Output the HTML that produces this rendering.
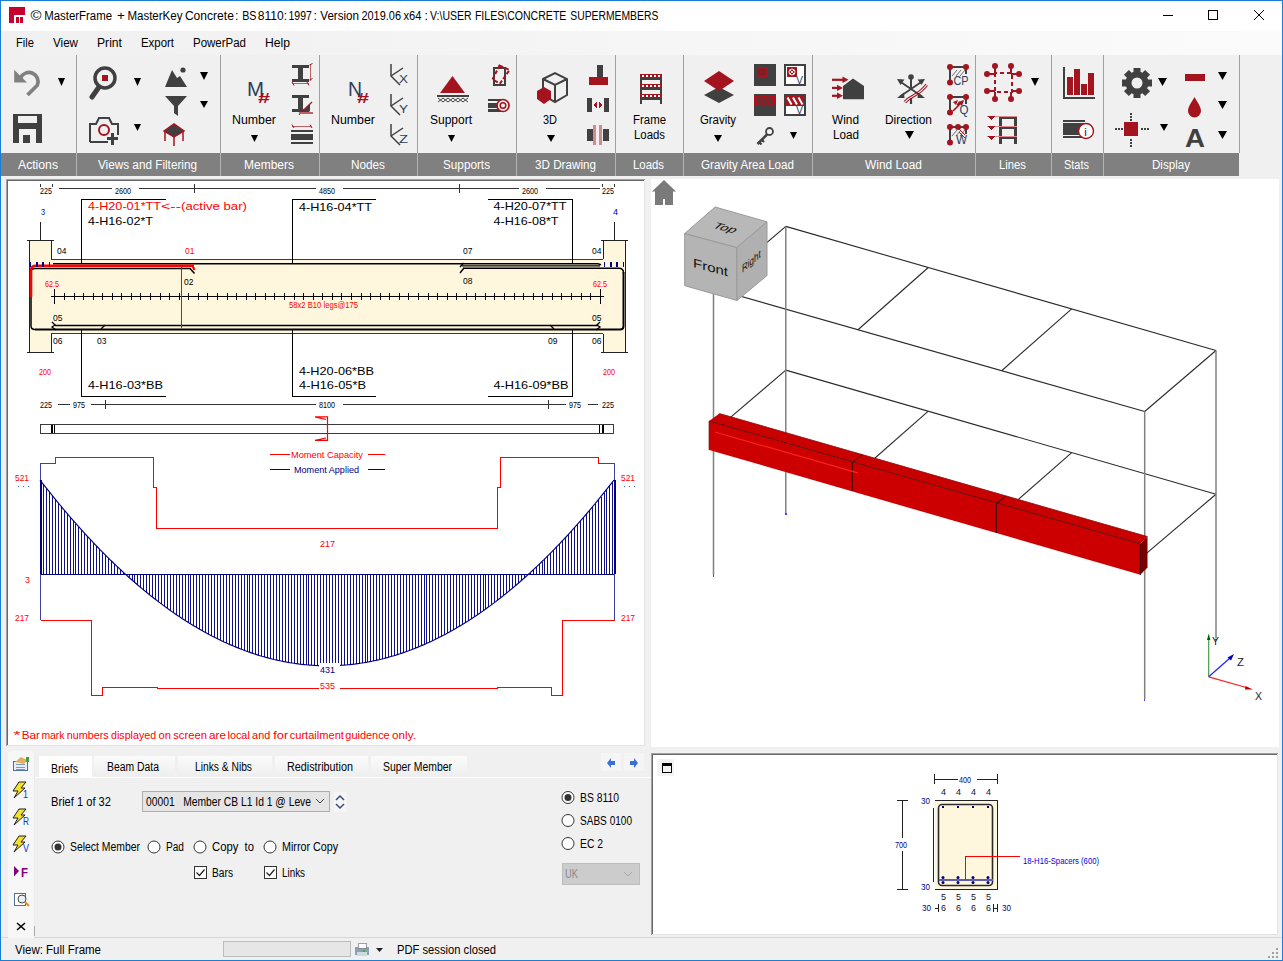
<!DOCTYPE html>
<html><head><meta charset="utf-8"><style>
html,body{margin:0;padding:0;width:1283px;height:961px;overflow:hidden;background:#f0f0f0}
svg{display:block}
</style></head><body>
<svg width="1283" height="961" viewBox="0 0 1283 961" shape-rendering="crispEdges">
<rect x="0" y="0" width="1283" height="961" fill="#f0f0f0" />
<rect x="1" y="1" width="1281" height="30" fill="#ffffff" />
<rect x="9" y="7" width="16" height="16" fill="#c8002e" />
<rect x="14" y="15" width="11" height="8" fill="#ffffff" />
<rect x="16" y="17" width="3" height="6" fill="#c8002e" />
<rect x="20" y="17" width="3" height="6" fill="#c8002e" />
<text x="30.5" y="20" font-size="12" fill="#000" textLength="11" lengthAdjust="spacingAndGlyphs" font-family='"Liberation Sans", sans-serif' >©</text>
<text x="44.2" y="20" font-size="12" fill="#000" textLength="67.9" lengthAdjust="spacingAndGlyphs" font-family='"Liberation Sans", sans-serif' >MasterFrame</text>
<text x="117.1" y="20" font-size="12" fill="#000" textLength="7.9" lengthAdjust="spacingAndGlyphs" font-family='"Liberation Sans", sans-serif' >+</text>
<text x="127.4" y="20" font-size="12" fill="#000" textLength="55.1" lengthAdjust="spacingAndGlyphs" font-family='"Liberation Sans", sans-serif' >MasterKey</text>
<text x="184.9" y="20" font-size="12" fill="#000" textLength="49.0" lengthAdjust="spacingAndGlyphs" font-family='"Liberation Sans", sans-serif' >Concrete</text>
<text x="235.1" y="20" font-size="12" fill="#000" textLength="3.4" lengthAdjust="spacingAndGlyphs" font-family='"Liberation Sans", sans-serif' >:</text>
<text x="242.2" y="20" font-size="12" fill="#000" textLength="14.3" lengthAdjust="spacingAndGlyphs" font-family='"Liberation Sans", sans-serif' >BS</text>
<text x="257.7" y="20" font-size="12" fill="#000" textLength="29.3" lengthAdjust="spacingAndGlyphs" font-family='"Liberation Sans", sans-serif' >8110:</text>
<text x="288.5" y="20" font-size="12" fill="#000" textLength="23.3" lengthAdjust="spacingAndGlyphs" font-family='"Liberation Sans", sans-serif' >1997</text>
<text x="313.4" y="20" font-size="12" fill="#000" textLength="3.4" lengthAdjust="spacingAndGlyphs" font-family='"Liberation Sans", sans-serif' >:</text>
<text x="320.3" y="20" font-size="12" fill="#000" textLength="38.7" lengthAdjust="spacingAndGlyphs" font-family='"Liberation Sans", sans-serif' >Version</text>
<text x="361.4" y="20" font-size="12" fill="#000" textLength="39.6" lengthAdjust="spacingAndGlyphs" font-family='"Liberation Sans", sans-serif' >2019.06</text>
<text x="403.5" y="20" font-size="12" fill="#000" textLength="18" lengthAdjust="spacingAndGlyphs" font-family='"Liberation Sans", sans-serif' >x64</text>
<text x="424.4" y="20" font-size="12" fill="#000" textLength="3.4" lengthAdjust="spacingAndGlyphs" font-family='"Liberation Sans", sans-serif' >:</text>
<text x="430.0" y="20" font-size="12" fill="#000" textLength="41.7" lengthAdjust="spacingAndGlyphs" font-family='"Liberation Sans", sans-serif' >V:\USER</text>
<text x="474.9" y="20" font-size="12" fill="#000" textLength="91.5" lengthAdjust="spacingAndGlyphs" font-family='"Liberation Sans", sans-serif' >FILES\CONCRETE</text>
<text x="570.3" y="20" font-size="12" fill="#000" textLength="88.0" lengthAdjust="spacingAndGlyphs" font-family='"Liberation Sans", sans-serif' >SUPERMEMBERS</text>
<line x1="1163" y1="15.5" x2="1173" y2="15.5" stroke="#000" stroke-width="1" />
<rect x="1208.5" y="10.5" width="9" height="9" fill="none" stroke="#000" stroke-width="1" />
<line x1="1254" y1="10" x2="1264" y2="20" stroke="#000" stroke-width="1" shape-rendering="geometricPrecision"/>
<line x1="1264" y1="10" x2="1254" y2="20" stroke="#000" stroke-width="1" shape-rendering="geometricPrecision"/>
<defs><linearGradient id="mg" x1="0" x2="1" y1="0" y2="0"><stop offset="0" stop-color="#f0f0f0"/><stop offset="1" stop-color="#fbfbfb"/></linearGradient></defs>
<rect x="1" y="31" width="1281" height="24" fill="url(#mg)" />
<text x="16" y="47" font-size="12" fill="#000" textLength="18" lengthAdjust="spacingAndGlyphs" font-family='"Liberation Sans", sans-serif' >File</text>
<text x="53" y="47" font-size="12" fill="#000" textLength="25" lengthAdjust="spacingAndGlyphs" font-family='"Liberation Sans", sans-serif' >View</text>
<text x="97" y="47" font-size="12" fill="#000" textLength="25" lengthAdjust="spacingAndGlyphs" font-family='"Liberation Sans", sans-serif' >Print</text>
<text x="141" y="47" font-size="12" fill="#000" textLength="33" lengthAdjust="spacingAndGlyphs" font-family='"Liberation Sans", sans-serif' >Export</text>
<text x="193" y="47" font-size="12" fill="#000" textLength="53" lengthAdjust="spacingAndGlyphs" font-family='"Liberation Sans", sans-serif' >PowerPad</text>
<text x="265" y="47" font-size="12" fill="#000" textLength="25" lengthAdjust="spacingAndGlyphs" font-family='"Liberation Sans", sans-serif' >Help</text>
<line x1="76.5" y1="55" x2="76.5" y2="153" stroke="#a0a0a0" stroke-width="1" />
<line x1="220.5" y1="55" x2="220.5" y2="153" stroke="#a0a0a0" stroke-width="1" />
<line x1="319.5" y1="55" x2="319.5" y2="153" stroke="#a0a0a0" stroke-width="1" />
<line x1="417.5" y1="55" x2="417.5" y2="153" stroke="#a0a0a0" stroke-width="1" />
<line x1="516.5" y1="55" x2="516.5" y2="153" stroke="#a0a0a0" stroke-width="1" />
<line x1="615.5" y1="55" x2="615.5" y2="153" stroke="#a0a0a0" stroke-width="1" />
<line x1="683.5" y1="55" x2="683.5" y2="153" stroke="#a0a0a0" stroke-width="1" />
<line x1="812.5" y1="55" x2="812.5" y2="153" stroke="#a0a0a0" stroke-width="1" />
<line x1="975.5" y1="55" x2="975.5" y2="153" stroke="#a0a0a0" stroke-width="1" />
<line x1="1051.5" y1="55" x2="1051.5" y2="153" stroke="#a0a0a0" stroke-width="1" />
<line x1="1103.5" y1="55" x2="1103.5" y2="153" stroke="#a0a0a0" stroke-width="1" />
<line x1="1239.5" y1="55" x2="1239.5" y2="153" stroke="#a0a0a0" stroke-width="1" />
<rect x="1" y="153" width="1238" height="23" fill="#808080" />
<line x1="76.5" y1="153" x2="76.5" y2="176" stroke="#b4b4b4" stroke-width="1" />
<line x1="220.5" y1="153" x2="220.5" y2="176" stroke="#b4b4b4" stroke-width="1" />
<line x1="319.5" y1="153" x2="319.5" y2="176" stroke="#b4b4b4" stroke-width="1" />
<line x1="417.5" y1="153" x2="417.5" y2="176" stroke="#b4b4b4" stroke-width="1" />
<line x1="516.5" y1="153" x2="516.5" y2="176" stroke="#b4b4b4" stroke-width="1" />
<line x1="615.5" y1="153" x2="615.5" y2="176" stroke="#b4b4b4" stroke-width="1" />
<line x1="683.5" y1="153" x2="683.5" y2="176" stroke="#b4b4b4" stroke-width="1" />
<line x1="812.5" y1="153" x2="812.5" y2="176" stroke="#b4b4b4" stroke-width="1" />
<line x1="975.5" y1="153" x2="975.5" y2="176" stroke="#b4b4b4" stroke-width="1" />
<line x1="1051.5" y1="153" x2="1051.5" y2="176" stroke="#b4b4b4" stroke-width="1" />
<line x1="1103.5" y1="153" x2="1103.5" y2="176" stroke="#b4b4b4" stroke-width="1" />
<text x="18" y="169" font-size="12" fill="#ffffff" textLength="40" lengthAdjust="spacingAndGlyphs" font-family='"Liberation Sans", sans-serif' >Actions</text>
<text x="98" y="169" font-size="12" fill="#ffffff" textLength="99" lengthAdjust="spacingAndGlyphs" font-family='"Liberation Sans", sans-serif' >Views and Filtering</text>
<text x="244" y="169" font-size="12" fill="#ffffff" textLength="50" lengthAdjust="spacingAndGlyphs" font-family='"Liberation Sans", sans-serif' >Members</text>
<text x="351" y="169" font-size="12" fill="#ffffff" textLength="34" lengthAdjust="spacingAndGlyphs" font-family='"Liberation Sans", sans-serif' >Nodes</text>
<text x="443" y="169" font-size="12" fill="#ffffff" textLength="47" lengthAdjust="spacingAndGlyphs" font-family='"Liberation Sans", sans-serif' >Supports</text>
<text x="535" y="169" font-size="12" fill="#ffffff" textLength="61" lengthAdjust="spacingAndGlyphs" font-family='"Liberation Sans", sans-serif' >3D Drawing</text>
<text x="633" y="169" font-size="12" fill="#ffffff" textLength="31" lengthAdjust="spacingAndGlyphs" font-family='"Liberation Sans", sans-serif' >Loads</text>
<text x="701" y="169" font-size="12" fill="#ffffff" textLength="93" lengthAdjust="spacingAndGlyphs" font-family='"Liberation Sans", sans-serif' >Gravity Area Load</text>
<text x="865" y="169" font-size="12" fill="#ffffff" textLength="57" lengthAdjust="spacingAndGlyphs" font-family='"Liberation Sans", sans-serif' >Wind Load</text>
<text x="999" y="169" font-size="12" fill="#ffffff" textLength="27" lengthAdjust="spacingAndGlyphs" font-family='"Liberation Sans", sans-serif' >Lines</text>
<text x="1064" y="169" font-size="12" fill="#ffffff" textLength="25" lengthAdjust="spacingAndGlyphs" font-family='"Liberation Sans", sans-serif' >Stats</text>
<text x="1152" y="169" font-size="12" fill="#ffffff" textLength="38" lengthAdjust="spacingAndGlyphs" font-family='"Liberation Sans", sans-serif' >Display</text>
<rect x="0.5" y="0.5" width="1282" height="960" fill="none" stroke="#1a7fd4" stroke-width="1" />
<rect x="6" y="179" width="639" height="567" fill="#ffffff" />
<line x1="6" y1="179.5" x2="645" y2="179.5" stroke="#a0a0a0" stroke-width="1" />
<line x1="6.5" y1="179" x2="6.5" y2="746" stroke="#a0a0a0" stroke-width="1" />
<line x1="7" y1="180.5" x2="644" y2="180.5" stroke="#696969" stroke-width="1" />
<line x1="7.5" y1="180" x2="7.5" y2="745" stroke="#696969" stroke-width="1" />
<line x1="644.5" y1="180" x2="644.5" y2="746" stroke="#e3e3e3" stroke-width="1" />
<line x1="7" y1="745.5" x2="645" y2="745.5" stroke="#e3e3e3" stroke-width="1" />
<rect x="651" y="179" width="628" height="568" fill="#ffffff" />
<rect x="651" y="753" width="627" height="182" fill="#ffffff" />
<line x1="651" y1="753.5" x2="1278" y2="753.5" stroke="#a0a0a0" stroke-width="1" />
<line x1="651.5" y1="753" x2="651.5" y2="935" stroke="#a0a0a0" stroke-width="1" />
<line x1="652" y1="754.5" x2="1277" y2="754.5" stroke="#696969" stroke-width="1" />
<line x1="652.5" y1="754" x2="652.5" y2="934" stroke="#696969" stroke-width="1" />
<line x1="1277.5" y1="754" x2="1277.5" y2="935" stroke="#e3e3e3" stroke-width="1" />
<line x1="652" y1="934.5" x2="1278" y2="934.5" stroke="#e3e3e3" stroke-width="1" />
<line x1="1" y1="937.5" x2="1282" y2="937.5" stroke="#d7d7d7" stroke-width="1" />
<text x="15" y="954" font-size="12" fill="#000" textLength="86" lengthAdjust="spacingAndGlyphs" font-family='"Liberation Sans", sans-serif' >View: Full Frame</text>
<rect x="223.5" y="941.5" width="127" height="15" fill="#e6e6e6" stroke="#bcbcbc" stroke-width="1" />
<text x="397" y="954" font-size="12" fill="#000" textLength="99" lengthAdjust="spacingAndGlyphs" font-family='"Liberation Sans", sans-serif' >PDF session closed</text>
<path d="M20.5,78 A8.9,8.9 0 1 1 37.3,85.3 L27.5,95" fill="none" stroke="#808080" stroke-width="3.7" shape-rendering="geometricPrecision"/>
<polygon points="14.2,69.7 27,82.6 14.2,82.6" fill="#808080" shape-rendering="geometricPrecision"/>
<polygon points="58,78 65,78 61.5,86" fill="#000" shape-rendering="geometricPrecision"/>
<rect x="13" y="114" width="29" height="29" fill="#404040" />
<rect x="18" y="116" width="19" height="7" fill="#f0f0f0" />
<rect x="19" y="129" width="17" height="14" fill="#f0f0f0" />
<rect x="23" y="135" width="7" height="8" fill="#404040" />
<circle cx="105" cy="78" r="10" fill="none" stroke="#404040" stroke-width="3.5" shape-rendering="geometricPrecision"/>
<rect x="102" y="75" width="6" height="6" fill="#a3141e" />
<line x1="99" y1="87" x2="92" y2="97" stroke="#404040" stroke-width="5" shape-rendering="geometricPrecision" stroke-linecap="round"/>
<polygon points="134,78 141,78 137.5,86" fill="#000" shape-rendering="geometricPrecision"/>
<path d="M90,142 V124 H96 L99,118 H109 L112,124 H118 V135" fill="none" stroke="#404040" stroke-width="2" shape-rendering="geometricPrecision"/>
<path d="M90,142 H108" fill="none" stroke="#404040" stroke-width="2" shape-rendering="geometricPrecision"/>
<circle cx="104" cy="130" r="5" fill="none" stroke="#a3141e" stroke-width="2" shape-rendering="geometricPrecision"/>
<rect x="111" y="133" width="3" height="12" fill="#404040" />
<rect x="107" y="137" width="11" height="3" fill="#404040" />
<polygon points="134,124 141,124 137.5,131" fill="#000" shape-rendering="geometricPrecision"/>
<polygon points="165,87 172,70 177,78 180,76 187,87" fill="#404040" shape-rendering="geometricPrecision"/>
<circle cx="183" cy="70" r="2.6" fill="#404040" shape-rendering="geometricPrecision"/>
<polygon points="200,72 208,72 204.0,80" fill="#000" shape-rendering="geometricPrecision"/>
<polygon points="165,96 187,96 178,106 178,116 174,113 174,106" fill="#404040" shape-rendering="geometricPrecision"/>
<polygon points="200,101 208,101 204.0,108" fill="#000" shape-rendering="geometricPrecision"/>
<polygon points="164,131 174,124 184,131 174,137" fill="#404040" stroke="#a3141e" stroke-width="1.5" shape-rendering="geometricPrecision"/>
<line x1="165" y1="131" x2="165" y2="141" stroke="#a3141e" stroke-width="1.5" shape-rendering="geometricPrecision"/>
<line x1="183" y1="131" x2="183" y2="141" stroke="#a3141e" stroke-width="1.5" shape-rendering="geometricPrecision"/>
<line x1="174" y1="137" x2="174" y2="146" stroke="#a3141e" stroke-width="1.5" shape-rendering="geometricPrecision"/>
<text x="247" y="96" font-size="20.5" fill="#2f3b5c" textLength="17" lengthAdjust="spacingAndGlyphs" font-family='"Liberation Sans", sans-serif' >M</text>
<text x="258" y="103" font-size="14" fill="#a3141e" textLength="12" lengthAdjust="spacingAndGlyphs" font-family='"Liberation Sans", sans-serif' font-weight="bold">#</text>
<text x="232" y="124" font-size="12" fill="#000" textLength="44" lengthAdjust="spacingAndGlyphs" font-family='"Liberation Sans", sans-serif' >Number</text>
<polygon points="251,135 258,135 254.5,142" fill="#000" shape-rendering="geometricPrecision"/>
<rect x="292" y="64.5" width="17" height="3.3" fill="#404040" />
<rect x="292" y="78.5" width="17" height="3.2" fill="#404040" />
<rect x="298" y="67" width="4.5" height="12" fill="#404040" />
<line x1="292" y1="83.8" x2="309" y2="83.8" stroke="#c06068" stroke-width="1.2" />
<line x1="310.8" y1="64" x2="310.8" y2="81" stroke="#c06068" stroke-width="1.2" />
<path d="M292,82 l2,3.5 M307,82 l2,3.5 M309.5,65 l3,-1.5 M309.5,80 l3,-1.5" fill="none" stroke="#a3141e" stroke-width="1" shape-rendering="geometricPrecision"/>
<rect x="292" y="95" width="17" height="3.3" fill="#404040" />
<rect x="292" y="108.5" width="17" height="3.2" fill="#404040" />
<rect x="298" y="97" width="4.5" height="12" fill="#404040" />
<polygon points="302,111.5 310,104 310,111.5" fill="#404040" shape-rendering="geometricPrecision"/>
<line x1="299" y1="114.5" x2="312" y2="102" stroke="#a3141e" stroke-width="1.2" shape-rendering="geometricPrecision"/>
<line x1="299" y1="113" x2="313" y2="113" stroke="#c06068" stroke-width="1.2" />
<line x1="292" y1="126.5" x2="312" y2="126.5" stroke="#c06068" stroke-width="1.2" />
<path d="M292,124.5 l2,3.5 M310,124.5 l2,3.5" fill="none" stroke="#a3141e" stroke-width="1" shape-rendering="geometricPrecision"/>
<rect x="291" y="129.7" width="22" height="2" fill="#404040" />
<rect x="291" y="133.6" width="22" height="6.7" fill="#404040" />
<rect x="291" y="141.7" width="22" height="2" fill="#404040" />
<text x="348" y="96" font-size="20.5" fill="#2f3b5c" textLength="14" lengthAdjust="spacingAndGlyphs" font-family='"Liberation Sans", sans-serif' >N</text>
<text x="357" y="103" font-size="14" fill="#a3141e" textLength="12" lengthAdjust="spacingAndGlyphs" font-family='"Liberation Sans", sans-serif' font-weight="bold">#</text>
<text x="331" y="124" font-size="12" fill="#000" textLength="44" lengthAdjust="spacingAndGlyphs" font-family='"Liberation Sans", sans-serif' >Number</text>
<path d="M391,64 V76 L400,85" fill="none" stroke="#404040" stroke-width="1.5" shape-rendering="geometricPrecision"/>
<line x1="391" y1="76" x2="403" y2="68" stroke="#404040" stroke-width="1.5" shape-rendering="geometricPrecision"/>
<text x="399" y="83" font-size="11" fill="#2f3b5c" textLength="9" lengthAdjust="spacingAndGlyphs" font-family='"Liberation Sans", sans-serif' >X</text>
<path d="M391,94 V106 L400,115" fill="none" stroke="#404040" stroke-width="1.5" shape-rendering="geometricPrecision"/>
<line x1="391" y1="106" x2="403" y2="98" stroke="#404040" stroke-width="1.5" shape-rendering="geometricPrecision"/>
<text x="399" y="113" font-size="11" fill="#2f3b5c" textLength="9" lengthAdjust="spacingAndGlyphs" font-family='"Liberation Sans", sans-serif' >Y</text>
<path d="M391,124 V136 L400,145" fill="none" stroke="#404040" stroke-width="1.5" shape-rendering="geometricPrecision"/>
<line x1="391" y1="136" x2="403" y2="128" stroke="#404040" stroke-width="1.5" shape-rendering="geometricPrecision"/>
<text x="399" y="143" font-size="11" fill="#2f3b5c" textLength="9" lengthAdjust="spacingAndGlyphs" font-family='"Liberation Sans", sans-serif' >Z</text>
<polygon points="440,93 452.5,76 465,93" fill="#a3141e" shape-rendering="geometricPrecision"/>
<rect x="437" y="95" width="32" height="2" fill="#404040" />
<path d="M438,98 L443,102 M443,98 L438,102" fill="none" stroke="#404040" stroke-width="1" shape-rendering="geometricPrecision"/>
<path d="M443,98 L448,102 M448,98 L443,102" fill="none" stroke="#404040" stroke-width="1" shape-rendering="geometricPrecision"/>
<path d="M448,98 L453,102 M453,98 L448,102" fill="none" stroke="#404040" stroke-width="1" shape-rendering="geometricPrecision"/>
<path d="M453,98 L458,102 M458,98 L453,102" fill="none" stroke="#404040" stroke-width="1" shape-rendering="geometricPrecision"/>
<path d="M458,98 L463,102 M463,98 L458,102" fill="none" stroke="#404040" stroke-width="1" shape-rendering="geometricPrecision"/>
<path d="M463,98 L468,102 M468,98 L463,102" fill="none" stroke="#404040" stroke-width="1" shape-rendering="geometricPrecision"/>
<text x="430" y="124" font-size="12" fill="#000" textLength="42" lengthAdjust="spacingAndGlyphs" font-family='"Liberation Sans", sans-serif' >Support</text>
<polygon points="448,135 455,135 451.5,142" fill="#000" shape-rendering="geometricPrecision"/>
<rect x="493.5" y="67.5" width="11.5" height="17.5" fill="none" stroke="#404040" stroke-width="2" />
<polygon points="499.5,65.5 509.5,70 500,83.5 492.5,79.5" fill="none" stroke="#a3141e" stroke-width="2" shape-rendering="geometricPrecision" stroke-dasharray="4,2"/>
<rect x="488" y="99" width="15" height="2.2" fill="#404040" />
<rect x="488" y="102.5" width="15" height="5.5" fill="#404040" />
<rect x="488" y="109.3" width="15" height="2.2" fill="#404040" />
<circle cx="503" cy="105.5" r="6" fill="#f0f0f0" stroke="#a3141e" stroke-width="1.7" shape-rendering="geometricPrecision"/>
<circle cx="503" cy="105.5" r="2.8" fill="none" stroke="#a3141e" stroke-width="1.5" shape-rendering="geometricPrecision"/>
<polygon points="543,79 555,73 567,79 567,95 555,102 543,95" fill="none" stroke="#404040" stroke-width="2" shape-rendering="geometricPrecision"/>
<path d="M543,79 L555,85 L567,79 M555,85 V102" fill="none" stroke="#404040" stroke-width="2" shape-rendering="geometricPrecision"/>
<polygon points="544,87 551,91 551,99 544,104 537,99 537,91" fill="#a3141e" shape-rendering="geometricPrecision"/>
<text x="543" y="124" font-size="12" fill="#000" textLength="14" lengthAdjust="spacingAndGlyphs" font-family='"Liberation Sans", sans-serif' >3D</text>
<polygon points="547,135 555,135 551.0,142" fill="#000" shape-rendering="geometricPrecision"/>
<rect x="597" y="65" width="6" height="12" fill="#404040" />
<rect x="589" y="77" width="19" height="8" fill="#a3141e" />
<rect x="587" y="98" width="5" height="14" fill="#404040" />
<rect x="604" y="98" width="5" height="14" fill="#404040" />
<polygon points="593,105 597,102 597,108" fill="#a3141e" />
<polygon points="603,105 599,102 599,108" fill="#a3141e" />
<rect x="587" y="129" width="6" height="12" fill="#404040" />
<rect x="603" y="129" width="6" height="12" fill="#404040" />
<rect x="593" y="125" width="3" height="20" fill="#d08a90" />
<rect x="599" y="125" width="3" height="20" fill="#d08a90" />
<rect x="640" y="74" width="2.3" height="30" fill="#404040" />
<rect x="660" y="74" width="2.3" height="30" fill="#404040" />
<rect x="640" y="74" width="22.3" height="4.3" fill="#a3141e" />
<rect x="641" y="78.3" width="20" height="2" fill="#404040" />
<rect x="642.3" y="75.3" width="2" height="2" fill="#ffffff" />
<rect x="646.3" y="75.3" width="2" height="2" fill="#ffffff" />
<rect x="650.3" y="75.3" width="2" height="2" fill="#ffffff" />
<rect x="654.3" y="75.3" width="2" height="2" fill="#ffffff" />
<rect x="658.3" y="75.3" width="2" height="2" fill="#ffffff" />
<rect x="640" y="84" width="22.3" height="4.3" fill="#a3141e" />
<rect x="641" y="88.3" width="20" height="2" fill="#404040" />
<rect x="642.3" y="85.3" width="2" height="2" fill="#ffffff" />
<rect x="646.3" y="85.3" width="2" height="2" fill="#ffffff" />
<rect x="650.3" y="85.3" width="2" height="2" fill="#ffffff" />
<rect x="654.3" y="85.3" width="2" height="2" fill="#ffffff" />
<rect x="658.3" y="85.3" width="2" height="2" fill="#ffffff" />
<rect x="640" y="94" width="22.3" height="4.3" fill="#a3141e" />
<rect x="641" y="98.3" width="20" height="2" fill="#404040" />
<rect x="642.3" y="95.3" width="2" height="2" fill="#ffffff" />
<rect x="646.3" y="95.3" width="2" height="2" fill="#ffffff" />
<rect x="650.3" y="95.3" width="2" height="2" fill="#ffffff" />
<rect x="654.3" y="95.3" width="2" height="2" fill="#ffffff" />
<rect x="658.3" y="95.3" width="2" height="2" fill="#ffffff" />
<text x="633" y="124" font-size="12" fill="#000" textLength="33" lengthAdjust="spacingAndGlyphs" font-family='"Liberation Sans", sans-serif' >Frame</text>
<text x="634" y="139" font-size="12" fill="#000" textLength="31" lengthAdjust="spacingAndGlyphs" font-family='"Liberation Sans", sans-serif' >Loads</text>
<polygon points="704,95 719,87 734,95 719,103" fill="#404040" shape-rendering="geometricPrecision"/>
<polygon points="704,81 719,71 734,81 719,91" fill="#a3141e" shape-rendering="geometricPrecision"/>
<text x="700" y="124" font-size="12" fill="#000" textLength="36" lengthAdjust="spacingAndGlyphs" font-family='"Liberation Sans", sans-serif' >Gravity</text>
<polygon points="714,135 722,135 718.0,142" fill="#000" shape-rendering="geometricPrecision"/>
<rect x="754" y="64" width="22" height="22" fill="#404040" />
<rect x="757" y="67" width="10" height="10" fill="#a3141e" />
<circle cx="762" cy="72" r="3" fill="none" stroke="#5a2a2a" stroke-width="0.9" shape-rendering="geometricPrecision"/>
<path d="M760,70 l4,4 m0,-4 l-4,4" fill="none" stroke="#5a2a2a" stroke-width="0.9" shape-rendering="geometricPrecision"/>
<rect x="785" y="65" width="20" height="20" fill="#ffffff" stroke="#404040" stroke-width="2" />
<rect x="787" y="67" width="10" height="10" fill="#a3141e" />
<circle cx="792" cy="72" r="3" fill="none" stroke="#ffffff" stroke-width="0.9" shape-rendering="geometricPrecision"/>
<path d="M790,70 l4,4 m0,-4 l-4,4" fill="none" stroke="#ffffff" stroke-width="0.9" shape-rendering="geometricPrecision"/>
<text x="796" y="84" font-size="10" fill="#2f3b5c" textLength="7" lengthAdjust="spacingAndGlyphs" font-family='"Liberation Sans", sans-serif' >V</text>
<rect x="754" y="94" width="22" height="22" fill="#404040" />
<rect x="754" y="96" width="22" height="10" fill="#a3141e" />
<line x1="757.0" y1="97.5" x2="761.0" y2="104.5" stroke="#404040" stroke-width="2" shape-rendering="geometricPrecision"/>
<line x1="762.5" y1="97.5" x2="766.5" y2="104.5" stroke="#404040" stroke-width="2" shape-rendering="geometricPrecision"/>
<line x1="768.0" y1="97.5" x2="772.0" y2="104.5" stroke="#404040" stroke-width="2" shape-rendering="geometricPrecision"/>
<rect x="785" y="95" width="20" height="20" fill="#ffffff" stroke="#404040" stroke-width="2" />
<rect x="786" y="96" width="18" height="10" fill="#a3141e" />
<line x1="787.5" y1="97.5" x2="791.5" y2="104.5" stroke="#ffffff" stroke-width="2" shape-rendering="geometricPrecision"/>
<line x1="793.0" y1="97.5" x2="797.0" y2="104.5" stroke="#ffffff" stroke-width="2" shape-rendering="geometricPrecision"/>
<line x1="798.5" y1="97.5" x2="802.5" y2="104.5" stroke="#ffffff" stroke-width="2" shape-rendering="geometricPrecision"/>
<text x="796" y="114" font-size="10" fill="#2f3b5c" textLength="7" lengthAdjust="spacingAndGlyphs" font-family='"Liberation Sans", sans-serif' >V</text>
<circle cx="769.5" cy="131.5" r="3.5" fill="none" stroke="#404040" stroke-width="1.8" shape-rendering="geometricPrecision"/>
<path d="M767,134.5 L757.5,144" fill="none" stroke="#404040" stroke-width="2.6" shape-rendering="geometricPrecision"/>
<path d="M759,142 l2.5,2.5 M761.5,139.5 l2.5,2.5" fill="none" stroke="#404040" stroke-width="2.2" shape-rendering="geometricPrecision"/>
<polygon points="790,132 797,132 793.5,139" fill="#000" shape-rendering="geometricPrecision"/>
<polygon points="843,86 853,78.6 864,86 864,99.2 843,99.2" fill="#404040" shape-rendering="geometricPrecision"/>
<line x1="832" y1="79.8" x2="844.5" y2="79.8" stroke="#a3141e" stroke-width="2.2" shape-rendering="geometricPrecision"/>
<polygon points="842.5,76.6 848.5,79.8 842.5,83.0" fill="#a3141e" shape-rendering="geometricPrecision"/>
<line x1="832" y1="87.9" x2="839" y2="87.9" stroke="#a3141e" stroke-width="2.2" shape-rendering="geometricPrecision"/>
<polygon points="837,84.7 843,87.9 837,91.10000000000001" fill="#a3141e" shape-rendering="geometricPrecision"/>
<line x1="832" y1="95.8" x2="839" y2="95.8" stroke="#a3141e" stroke-width="2.2" shape-rendering="geometricPrecision"/>
<polygon points="837,92.6 843,95.8 837,99.0" fill="#a3141e" shape-rendering="geometricPrecision"/>
<text x="832" y="124" font-size="12" fill="#000" textLength="27" lengthAdjust="spacingAndGlyphs" font-family='"Liberation Sans", sans-serif' >Wind</text>
<text x="833" y="139" font-size="12" fill="#000" textLength="26" lengthAdjust="spacingAndGlyphs" font-family='"Liberation Sans", sans-serif' >Load</text>
<circle cx="911" cy="77" r="2.8" fill="#404040" shape-rendering="geometricPrecision"/>
<line x1="911" y1="77" x2="911" y2="89" stroke="#404040" stroke-width="2" shape-rendering="geometricPrecision"/>
<line x1="911" y1="98" x2="911" y2="104" stroke="#404040" stroke-width="2.2" shape-rendering="geometricPrecision"/>
<path d="M911,89 L900,81.5 M911,89 L922,81.5 M911,89 L900,96.5 M911,89 L922,96.5" fill="none" stroke="#404040" stroke-width="1.8" shape-rendering="geometricPrecision"/>
<polygon points="897,79 904.5,79.5 900.5,85" fill="#404040" shape-rendering="geometricPrecision"/>
<polygon points="925,79 917.5,79.5 921.5,85" fill="#404040" shape-rendering="geometricPrecision"/>
<polygon points="897,98 904,92.5 904.5,98" fill="#404040" shape-rendering="geometricPrecision"/>
<polygon points="925,98 918,92.5 917.5,98" fill="#404040" shape-rendering="geometricPrecision"/>
<path d="M904,101.5 C910,94 917,96 926,84 M905.5,103 C911.5,95.5 918.5,97.5 927.5,85.5" fill="none" stroke="#a3141e" stroke-width="1.1" shape-rendering="geometricPrecision"/>
<text x="885" y="124" font-size="12" fill="#000" textLength="47" lengthAdjust="spacingAndGlyphs" font-family='"Liberation Sans", sans-serif' >Direction</text>
<polygon points="905,131 914,131 909.5,139" fill="#000" shape-rendering="geometricPrecision"/>
<path d="M966,74 V67 H950 V82.5" fill="none" stroke="#404040" stroke-width="2" shape-rendering="geometricPrecision"/>
<line x1="952" y1="76" x2="957" y2="70" stroke="#707070" stroke-width="1" shape-rendering="geometricPrecision"/>
<line x1="956" y1="76" x2="961" y2="70" stroke="#707070" stroke-width="1" shape-rendering="geometricPrecision"/>
<line x1="960" y1="76" x2="965" y2="70" stroke="#707070" stroke-width="1" shape-rendering="geometricPrecision"/>
<circle cx="950" cy="67" r="3" fill="#a3141e" shape-rendering="geometricPrecision"/>
<circle cx="966" cy="67" r="3" fill="#a3141e" shape-rendering="geometricPrecision"/>
<circle cx="950" cy="82.5" r="3" fill="#a3141e" shape-rendering="geometricPrecision"/>
<text x="953.5" y="84.8" font-size="12" fill="#2f3b5c" textLength="15" lengthAdjust="spacingAndGlyphs" font-family='"Liberation Sans", sans-serif' >CP</text>
<path d="M966,104 V97 H950 V112.5" fill="none" stroke="#404040" stroke-width="2" shape-rendering="geometricPrecision"/>
<path d="M953,111 L963,101 M957,105 l3,-3" fill="none" stroke="#a3141e" stroke-width="1.6" shape-rendering="geometricPrecision"/>
<polygon points="964,100 958,102 962,106" fill="#a3141e" shape-rendering="geometricPrecision"/>
<polygon points="958,100 953,102 956,105" fill="#a3141e" shape-rendering="geometricPrecision"/>
<circle cx="950" cy="97" r="3" fill="#a3141e" shape-rendering="geometricPrecision"/>
<circle cx="966" cy="97" r="3" fill="#a3141e" shape-rendering="geometricPrecision"/>
<circle cx="950" cy="112.5" r="3" fill="#a3141e" shape-rendering="geometricPrecision"/>
<text x="959.5" y="113.5" font-size="12" fill="#2f3b5c" textLength="9" lengthAdjust="spacingAndGlyphs" font-family='"Liberation Sans", sans-serif' >Q</text>
<path d="M966,134 V127 H950 V142.5" fill="none" stroke="#404040" stroke-width="2" shape-rendering="geometricPrecision"/>
<line x1="952" y1="136" x2="957" y2="130" stroke="#707070" stroke-width="1" shape-rendering="geometricPrecision"/>
<line x1="956" y1="136" x2="961" y2="130" stroke="#707070" stroke-width="1" shape-rendering="geometricPrecision"/>
<line x1="960" y1="136" x2="965" y2="130" stroke="#707070" stroke-width="1" shape-rendering="geometricPrecision"/>
<path d="M959,129 l6,6 M959,132 l6,6" fill="none" stroke="#a3141e" stroke-width="1" shape-rendering="geometricPrecision"/>
<circle cx="950" cy="127" r="3" fill="#a3141e" shape-rendering="geometricPrecision"/>
<circle cx="966" cy="127" r="3" fill="#a3141e" shape-rendering="geometricPrecision"/>
<circle cx="950" cy="142.5" r="3" fill="#a3141e" shape-rendering="geometricPrecision"/>
<circle cx="958" cy="127" r="3" fill="#a3141e" shape-rendering="geometricPrecision"/>
<text x="956" y="144.3" font-size="12" fill="#2f3b5c" textLength="11" lengthAdjust="spacingAndGlyphs" font-family='"Liberation Sans", sans-serif' >W</text>
<path d="M995,73 V92 H1012 V73 Z" fill="none" stroke="#a3141e" stroke-width="2" stroke-dasharray="4,3"/>
<circle cx="995" cy="66" r="3" fill="#a3141e" shape-rendering="geometricPrecision"/>
<circle cx="1011" cy="66" r="3" fill="#a3141e" shape-rendering="geometricPrecision"/>
<circle cx="987" cy="74" r="3" fill="#a3141e" shape-rendering="geometricPrecision"/>
<circle cx="1019" cy="74" r="3" fill="#a3141e" shape-rendering="geometricPrecision"/>
<circle cx="987" cy="91" r="3" fill="#a3141e" shape-rendering="geometricPrecision"/>
<circle cx="1019" cy="91" r="3" fill="#a3141e" shape-rendering="geometricPrecision"/>
<circle cx="995" cy="99" r="3" fill="#a3141e" shape-rendering="geometricPrecision"/>
<circle cx="1011" cy="99" r="3" fill="#a3141e" shape-rendering="geometricPrecision"/>
<line x1="995" y1="66" x2="995" y2="73" stroke="#a3141e" stroke-width="2" />
<line x1="1011" y1="66" x2="1011" y2="73" stroke="#a3141e" stroke-width="2" />
<line x1="987" y1="74" x2="995" y2="74" stroke="#a3141e" stroke-width="2" />
<line x1="1011" y1="74" x2="1019" y2="74" stroke="#a3141e" stroke-width="2" />
<line x1="987" y1="91" x2="995" y2="91" stroke="#a3141e" stroke-width="2" />
<line x1="1011" y1="91" x2="1019" y2="91" stroke="#a3141e" stroke-width="2" />
<line x1="995" y1="92" x2="995" y2="99" stroke="#a3141e" stroke-width="2" />
<line x1="1011" y1="92" x2="1011" y2="99" stroke="#a3141e" stroke-width="2" />
<polygon points="1031,78 1039,78 1035.0,86" fill="#000" shape-rendering="geometricPrecision"/>
<rect x="999" y="116" width="3" height="28" fill="#404040" />
<rect x="1014" y="116" width="3" height="28" fill="#404040" />
<rect x="999" y="116" width="18" height="3" fill="#404040" />
<line x1="987" y1="116.5" x2="1017" y2="116.5" stroke="#e08a90" stroke-width="1" />
<polygon points="987,116 995,116 991,120" fill="#a3141e" />
<rect x="999" y="126" width="18" height="3" fill="#404040" />
<line x1="987" y1="126.5" x2="1017" y2="126.5" stroke="#e08a90" stroke-width="1" />
<polygon points="987,126 995,126 991,130" fill="#a3141e" />
<rect x="999" y="136" width="18" height="3" fill="#404040" />
<line x1="987" y1="136.5" x2="1017" y2="136.5" stroke="#e08a90" stroke-width="1" />
<polygon points="987,136 995,136 991,140" fill="#a3141e" />
<rect x="1063" y="67" width="2" height="32" fill="#404040" />
<rect x="1063" y="97" width="32" height="2" fill="#404040" />
<rect x="1067" y="77" width="6" height="18" fill="#a3141e" />
<rect x="1074" y="69" width="6" height="26" fill="#a3141e" />
<rect x="1081" y="84" width="6" height="11" fill="#a3141e" />
<rect x="1088" y="73" width="6" height="22" fill="#a3141e" />
<rect x="1063" y="120" width="22" height="2" fill="#404040" />
<rect x="1063" y="123" width="22" height="12" fill="#404040" />
<rect x="1063" y="136" width="22" height="2" fill="#404040" />
<circle cx="1086" cy="131" r="7.5" fill="#ffffff" stroke="#a3141e" stroke-width="1.4" shape-rendering="geometricPrecision"/>
<text x="1084" y="136" font-size="10" fill="#2f3b5c" textLength="3" lengthAdjust="spacingAndGlyphs" font-family='"Liberation Sans", sans-serif' >i</text>
<circle cx="1137" cy="83" r="11.5" fill="#404040" shape-rendering="geometricPrecision"/>
<rect x="1133.5" y="68" width="7" height="6" fill="#404040" transform="rotate(0 1137 83)" shape-rendering="geometricPrecision"/>
<rect x="1133.5" y="68" width="7" height="6" fill="#404040" transform="rotate(45 1137 83)" shape-rendering="geometricPrecision"/>
<rect x="1133.5" y="68" width="7" height="6" fill="#404040" transform="rotate(90 1137 83)" shape-rendering="geometricPrecision"/>
<rect x="1133.5" y="68" width="7" height="6" fill="#404040" transform="rotate(135 1137 83)" shape-rendering="geometricPrecision"/>
<rect x="1133.5" y="68" width="7" height="6" fill="#404040" transform="rotate(180 1137 83)" shape-rendering="geometricPrecision"/>
<rect x="1133.5" y="68" width="7" height="6" fill="#404040" transform="rotate(225 1137 83)" shape-rendering="geometricPrecision"/>
<rect x="1133.5" y="68" width="7" height="6" fill="#404040" transform="rotate(270 1137 83)" shape-rendering="geometricPrecision"/>
<rect x="1133.5" y="68" width="7" height="6" fill="#404040" transform="rotate(315 1137 83)" shape-rendering="geometricPrecision"/>
<circle cx="1137" cy="83" r="5.5" fill="#f0f0f0" shape-rendering="geometricPrecision"/>
<polygon points="1158,78 1167,78 1162.5,86" fill="#000" shape-rendering="geometricPrecision"/>
<rect x="1124" y="122" width="14" height="14" fill="#a3141e" />
<rect x="1115" y="128" width="1.5" height="2" fill="#404040" />
<rect x="1141" y="128" width="1.5" height="2" fill="#404040" />
<rect x="1130" y="113" width="2" height="1.5" fill="#404040" />
<rect x="1130" y="139" width="2" height="1.5" fill="#404040" />
<rect x="1118" y="128" width="1.5" height="2" fill="#404040" />
<rect x="1144" y="128" width="1.5" height="2" fill="#404040" />
<rect x="1130" y="116" width="2" height="1.5" fill="#404040" />
<rect x="1130" y="142" width="2" height="1.5" fill="#404040" />
<rect x="1121" y="128" width="1.5" height="2" fill="#404040" />
<rect x="1147" y="128" width="1.5" height="2" fill="#404040" />
<rect x="1130" y="119" width="2" height="1.5" fill="#404040" />
<rect x="1130" y="145" width="2" height="1.5" fill="#404040" />
<polygon points="1160,124 1168,124 1164.0,131" fill="#000" shape-rendering="geometricPrecision"/>
<rect x="1185" y="74" width="20" height="7" fill="#a3141e" rx="1.5"/>
<polygon points="1218,72 1227,72 1222.5,80" fill="#000" shape-rendering="geometricPrecision"/>
<path d="M1194.5,97 C1191,103 1188,107 1188,111 A6.5,6.5 0 0 0 1201,111 C1201,107 1198,103 1194.5,97 Z" fill="#a3141e" shape-rendering="geometricPrecision"/>
<polygon points="1218,101 1227,101 1222.5,109" fill="#000" shape-rendering="geometricPrecision"/>
<text x="1185" y="147" font-size="25" fill="#404040" textLength="20" lengthAdjust="spacingAndGlyphs" font-family='"Liberation Sans", sans-serif' font-weight="bold">A</text>
<polygon points="1218,131 1227,131 1222.5,139" fill="#000" shape-rendering="geometricPrecision"/>
<line x1="59" y1="188.5" x2="112" y2="188.5" stroke="#333" stroke-width="1" />
<line x1="139" y1="188.5" x2="316" y2="188.5" stroke="#333" stroke-width="1" />
<line x1="343" y1="188.5" x2="519" y2="188.5" stroke="#333" stroke-width="1" />
<line x1="546" y1="188.5" x2="600" y2="188.5" stroke="#333" stroke-width="1" />
<line x1="194.5" y1="184" x2="194.5" y2="193" stroke="#333" stroke-width="1" />
<line x1="459.5" y1="184" x2="459.5" y2="193" stroke="#333" stroke-width="1" />
<line x1="40.5" y1="184" x2="40.5" y2="187" stroke="#333" stroke-width="1" />
<line x1="52.5" y1="184" x2="52.5" y2="187" stroke="#333" stroke-width="1" />
<line x1="602.5" y1="184" x2="602.5" y2="187" stroke="#333" stroke-width="1" />
<line x1="614.5" y1="184" x2="614.5" y2="187" stroke="#333" stroke-width="1" />
<text x="40" y="194" font-size="8.5" fill="#000" textLength="12" lengthAdjust="spacingAndGlyphs" font-family='"Liberation Sans", sans-serif' >225</text>
<text x="115" y="194" font-size="8.5" fill="#000" textLength="16" lengthAdjust="spacingAndGlyphs" font-family='"Liberation Sans", sans-serif' >2600</text>
<text x="319" y="194" font-size="8.5" fill="#000" textLength="16" lengthAdjust="spacingAndGlyphs" font-family='"Liberation Sans", sans-serif' >4850</text>
<text x="522" y="194" font-size="8.5" fill="#000" textLength="16" lengthAdjust="spacingAndGlyphs" font-family='"Liberation Sans", sans-serif' >2600</text>
<text x="602" y="194" font-size="8.5" fill="#000" textLength="12" lengthAdjust="spacingAndGlyphs" font-family='"Liberation Sans", sans-serif' >225</text>
<line x1="58" y1="404.5" x2="70" y2="404.5" stroke="#333" stroke-width="1" />
<line x1="91" y1="404.5" x2="316" y2="404.5" stroke="#333" stroke-width="1" />
<line x1="343" y1="404.5" x2="566" y2="404.5" stroke="#333" stroke-width="1" />
<line x1="588" y1="404.5" x2="598" y2="404.5" stroke="#333" stroke-width="1" />
<line x1="105.5" y1="400" x2="105.5" y2="409" stroke="#333" stroke-width="1" />
<line x1="548.5" y1="400" x2="548.5" y2="409" stroke="#333" stroke-width="1" />
<text x="40" y="408" font-size="8.5" fill="#000" textLength="12" lengthAdjust="spacingAndGlyphs" font-family='"Liberation Sans", sans-serif' >225</text>
<text x="73" y="408" font-size="8.5" fill="#000" textLength="12" lengthAdjust="spacingAndGlyphs" font-family='"Liberation Sans", sans-serif' >975</text>
<text x="319" y="408" font-size="8.5" fill="#000" textLength="16" lengthAdjust="spacingAndGlyphs" font-family='"Liberation Sans", sans-serif' >8100</text>
<text x="569" y="408" font-size="8.5" fill="#000" textLength="12" lengthAdjust="spacingAndGlyphs" font-family='"Liberation Sans", sans-serif' >975</text>
<text x="602" y="408" font-size="8.5" fill="#000" textLength="12" lengthAdjust="spacingAndGlyphs" font-family='"Liberation Sans", sans-serif' >225</text>
<line x1="81.5" y1="199" x2="81.5" y2="264" stroke="#000" stroke-width="1" />
<line x1="81" y1="199.5" x2="166" y2="199.5" stroke="#000" stroke-width="1" />
<line x1="81.5" y1="330" x2="81.5" y2="396" stroke="#000" stroke-width="1" />
<line x1="81" y1="396.5" x2="166" y2="396.5" stroke="#000" stroke-width="1" />
<line x1="292.5" y1="199" x2="292.5" y2="264" stroke="#000" stroke-width="1" />
<line x1="292" y1="199.5" x2="376" y2="199.5" stroke="#000" stroke-width="1" />
<line x1="292.5" y1="330" x2="292.5" y2="396" stroke="#000" stroke-width="1" />
<line x1="292" y1="396.5" x2="376" y2="396.5" stroke="#000" stroke-width="1" />
<line x1="572.5" y1="199" x2="572.5" y2="264" stroke="#000" stroke-width="1" />
<line x1="488" y1="199.5" x2="573" y2="199.5" stroke="#000" stroke-width="1" />
<line x1="572.5" y1="330" x2="572.5" y2="396" stroke="#000" stroke-width="1" />
<line x1="488" y1="396.5" x2="573" y2="396.5" stroke="#000" stroke-width="1" />
<text x="88" y="210" font-size="10.5" fill="#ff0000" textLength="73" lengthAdjust="spacingAndGlyphs" font-family='"Liberation Sans", sans-serif' >4-H20-01*TT</text>
<text x="161" y="210" font-size="10.5" fill="#ff0000" textLength="20" lengthAdjust="spacingAndGlyphs" font-family='"Liberation Sans", sans-serif' >&lt;--</text>
<text x="181" y="210" font-size="10.5" fill="#ff0000" textLength="66" lengthAdjust="spacingAndGlyphs" font-family='"Liberation Sans", sans-serif' >(active bar)</text>
<text x="88" y="224.5" font-size="10.5" fill="#000" textLength="65" lengthAdjust="spacingAndGlyphs" font-family='"Liberation Sans", sans-serif' >4-H16-02*T</text>
<text x="299" y="211" font-size="10.5" fill="#000" textLength="73" lengthAdjust="spacingAndGlyphs" font-family='"Liberation Sans", sans-serif' >4-H16-04*TT</text>
<text x="493.5" y="210" font-size="10.5" fill="#000" textLength="73" lengthAdjust="spacingAndGlyphs" font-family='"Liberation Sans", sans-serif' >4-H20-07*TT</text>
<text x="493.5" y="224.5" font-size="10.5" fill="#000" textLength="65" lengthAdjust="spacingAndGlyphs" font-family='"Liberation Sans", sans-serif' >4-H16-08*T</text>
<text x="88" y="389" font-size="10.5" fill="#000" textLength="75" lengthAdjust="spacingAndGlyphs" font-family='"Liberation Sans", sans-serif' >4-H16-03*BB</text>
<text x="299" y="375" font-size="10.5" fill="#000" textLength="75" lengthAdjust="spacingAndGlyphs" font-family='"Liberation Sans", sans-serif' >4-H20-06*BB</text>
<text x="299" y="389" font-size="10.5" fill="#000" textLength="67" lengthAdjust="spacingAndGlyphs" font-family='"Liberation Sans", sans-serif' >4-H16-05*B</text>
<text x="493.5" y="389" font-size="10.5" fill="#000" textLength="75" lengthAdjust="spacingAndGlyphs" font-family='"Liberation Sans", sans-serif' >4-H16-09*BB</text>
<rect x="29" y="240" width="22" height="112" fill="#fff7dd" />
<line x1="27" y1="240.5" x2="54" y2="240.5" stroke="#222" stroke-width="1" />
<line x1="27" y1="352.5" x2="54" y2="352.5" stroke="#222" stroke-width="1" />
<line x1="29.5" y1="240" x2="29.5" y2="353" stroke="#222" stroke-width="1" />
<line x1="51.5" y1="240" x2="51.5" y2="353" stroke="#222" stroke-width="1" />
<rect x="603" y="240" width="22" height="112" fill="#fff7dd" />
<line x1="601" y1="240.5" x2="628" y2="240.5" stroke="#222" stroke-width="1" />
<line x1="601" y1="352.5" x2="628" y2="352.5" stroke="#222" stroke-width="1" />
<line x1="603.5" y1="240" x2="603.5" y2="353" stroke="#222" stroke-width="1" />
<line x1="625.5" y1="240" x2="625.5" y2="353" stroke="#222" stroke-width="1" />
<line x1="40.5" y1="222" x2="40.5" y2="240" stroke="#222" stroke-width="1" />
<line x1="614.5" y1="222" x2="614.5" y2="240" stroke="#222" stroke-width="1" />
<text x="41" y="215" font-size="8.5" fill="#0000c0" textLength="4" lengthAdjust="spacingAndGlyphs" font-family='"Liberation Sans", sans-serif' >3</text>
<text x="613" y="215" font-size="8.5" fill="#0000c0" textLength="5" lengthAdjust="spacingAndGlyphs" font-family='"Liberation Sans", sans-serif' >4</text>
<text x="39" y="375" font-size="8.5" fill="#ff0000" textLength="12" lengthAdjust="spacingAndGlyphs" font-family='"Liberation Sans", sans-serif' >200</text>
<text x="603" y="375" font-size="8.5" fill="#ff0000" textLength="12" lengthAdjust="spacingAndGlyphs" font-family='"Liberation Sans", sans-serif' >200</text>
<rect x="29" y="259" width="597" height="75" fill="#fff7dd" />
<line x1="51" y1="259.5" x2="603" y2="259.5" stroke="#3a3a3a" stroke-width="1" />
<line x1="51" y1="333.5" x2="603" y2="333.5" stroke="#3a3a3a" stroke-width="1" />
<line x1="29.5" y1="259" x2="29.5" y2="334" stroke="#222" stroke-width="1" />
<line x1="625.5" y1="259" x2="625.5" y2="334" stroke="#222" stroke-width="1" />
<line x1="81.5" y1="259" x2="81.5" y2="264" stroke="#000" stroke-width="1" />
<line x1="81.5" y1="329" x2="81.5" y2="334" stroke="#000" stroke-width="1" />
<line x1="292.5" y1="259" x2="292.5" y2="264" stroke="#000" stroke-width="1" />
<line x1="292.5" y1="329" x2="292.5" y2="334" stroke="#000" stroke-width="1" />
<line x1="572.5" y1="259" x2="572.5" y2="264" stroke="#000" stroke-width="1" />
<line x1="572.5" y1="329" x2="572.5" y2="334" stroke="#000" stroke-width="1" />
<path d="M53,263.8 H598 l3,1" fill="none" stroke="#000" stroke-width="1.6" shape-rendering="geometricPrecision"/>
<path d="M460,267 l3.5,-4 M460,273 l4,-5" fill="none" stroke="#000" stroke-width="1.4" shape-rendering="geometricPrecision"/>
<path d="M462,265.9 H600" fill="none" stroke="#000" stroke-width="1.3" shape-rendering="geometricPrecision"/>
<path d="M463,268.2 H619 Q623.5,268.2 623.5,273" fill="none" stroke="#000" stroke-width="1.5" shape-rendering="geometricPrecision"/>
<path d="M31,297 V272 Q31,268.6 35,268.6 H190 L194.5,273.6" fill="none" stroke="#000" stroke-width="1.5" shape-rendering="geometricPrecision"/>
<path d="M31,297 V326 Q31,329.5 35,329.5" fill="none" stroke="#000" stroke-width="1.5" shape-rendering="geometricPrecision"/>
<path d="M31,297 V270 Q31,265.7 36,265.7 H194" fill="none" stroke="#ff0000" stroke-width="2.6" shape-rendering="geometricPrecision"/>
<path d="M192,265 L194.5,270" fill="none" stroke="#ff0000" stroke-width="2.2" shape-rendering="geometricPrecision"/>
<path d="M623.5,272 V326 Q623.5,329.5 620,329.5" fill="none" stroke="#000" stroke-width="2" shape-rendering="geometricPrecision"/>
<rect x="29.8" y="262" width="1.6" height="5" fill="#000080" />
<rect x="36.300000000000004" y="262" width="1.6" height="5" fill="#000080" />
<rect x="42.400000000000006" y="262" width="1.6" height="5" fill="#000080" />
<rect x="48.7" y="262" width="1.6" height="5" fill="#000080" />
<rect x="603.7" y="262" width="1.6" height="5" fill="#000080" />
<rect x="610.0" y="262" width="1.6" height="5" fill="#000080" />
<rect x="616.4000000000001" y="262" width="1.6" height="5" fill="#000080" />
<rect x="622.7" y="262" width="1.6" height="5" fill="#000080" />
<path d="M55,325.4 H598" fill="none" stroke="#000" stroke-width="1.5" shape-rendering="geometricPrecision"/>
<path d="M35,329.5 H620" fill="none" stroke="#000" stroke-width="1.8" shape-rendering="geometricPrecision"/>
<path d="M52,322 l3,3 l-3,2 l4,3" fill="none" stroke="#000" stroke-width="1.3" shape-rendering="geometricPrecision"/>
<path d="M600,322 l-3,3 l3,2 l-4,3" fill="none" stroke="#000" stroke-width="1.3" shape-rendering="geometricPrecision"/>
<path d="M101,329 l4,-4" fill="none" stroke="#000" stroke-width="1.3" shape-rendering="geometricPrecision"/>
<path d="M550,325 l4,4" fill="none" stroke="#000" stroke-width="1.3" shape-rendering="geometricPrecision"/>
<line x1="51" y1="296.5" x2="604" y2="296.5" stroke="#000" stroke-width="1" />
<line x1="54.5" y1="289" x2="54.5" y2="304" stroke="#000" stroke-width="1" />
<line x1="64.5" y1="293" x2="64.5" y2="300" stroke="#000" stroke-width="1" />
<line x1="74.5" y1="293" x2="74.5" y2="300" stroke="#000" stroke-width="1" />
<line x1="83.5" y1="293" x2="83.5" y2="300" stroke="#000" stroke-width="1" />
<line x1="93.5" y1="293" x2="93.5" y2="300" stroke="#000" stroke-width="1" />
<line x1="102.5" y1="293" x2="102.5" y2="300" stroke="#000" stroke-width="1" />
<line x1="112.5" y1="293" x2="112.5" y2="300" stroke="#000" stroke-width="1" />
<line x1="121.5" y1="293" x2="121.5" y2="300" stroke="#000" stroke-width="1" />
<line x1="131.5" y1="293" x2="131.5" y2="300" stroke="#000" stroke-width="1" />
<line x1="140.5" y1="293" x2="140.5" y2="300" stroke="#000" stroke-width="1" />
<line x1="150.5" y1="293" x2="150.5" y2="300" stroke="#000" stroke-width="1" />
<line x1="160.5" y1="293" x2="160.5" y2="300" stroke="#000" stroke-width="1" />
<line x1="169.5" y1="293" x2="169.5" y2="300" stroke="#000" stroke-width="1" />
<line x1="179.5" y1="293" x2="179.5" y2="300" stroke="#000" stroke-width="1" />
<line x1="188.5" y1="293" x2="188.5" y2="300" stroke="#000" stroke-width="1" />
<line x1="198.5" y1="293" x2="198.5" y2="300" stroke="#000" stroke-width="1" />
<line x1="207.5" y1="293" x2="207.5" y2="300" stroke="#000" stroke-width="1" />
<line x1="217.5" y1="293" x2="217.5" y2="300" stroke="#000" stroke-width="1" />
<line x1="227.5" y1="293" x2="227.5" y2="300" stroke="#000" stroke-width="1" />
<line x1="236.5" y1="293" x2="236.5" y2="300" stroke="#000" stroke-width="1" />
<line x1="246.5" y1="293" x2="246.5" y2="300" stroke="#000" stroke-width="1" />
<line x1="255.5" y1="293" x2="255.5" y2="300" stroke="#000" stroke-width="1" />
<line x1="265.5" y1="293" x2="265.5" y2="300" stroke="#000" stroke-width="1" />
<line x1="274.5" y1="293" x2="274.5" y2="300" stroke="#000" stroke-width="1" />
<line x1="284.5" y1="293" x2="284.5" y2="300" stroke="#000" stroke-width="1" />
<line x1="294.5" y1="293" x2="294.5" y2="300" stroke="#000" stroke-width="1" />
<line x1="303.5" y1="293" x2="303.5" y2="300" stroke="#000" stroke-width="1" />
<line x1="313.5" y1="293" x2="313.5" y2="300" stroke="#000" stroke-width="1" />
<line x1="322.5" y1="293" x2="322.5" y2="300" stroke="#000" stroke-width="1" />
<line x1="332.5" y1="293" x2="332.5" y2="300" stroke="#000" stroke-width="1" />
<line x1="341.5" y1="293" x2="341.5" y2="300" stroke="#000" stroke-width="1" />
<line x1="351.5" y1="293" x2="351.5" y2="300" stroke="#000" stroke-width="1" />
<line x1="361.5" y1="293" x2="361.5" y2="300" stroke="#000" stroke-width="1" />
<line x1="370.5" y1="293" x2="370.5" y2="300" stroke="#000" stroke-width="1" />
<line x1="380.5" y1="293" x2="380.5" y2="300" stroke="#000" stroke-width="1" />
<line x1="389.5" y1="293" x2="389.5" y2="300" stroke="#000" stroke-width="1" />
<line x1="399.5" y1="293" x2="399.5" y2="300" stroke="#000" stroke-width="1" />
<line x1="408.5" y1="293" x2="408.5" y2="300" stroke="#000" stroke-width="1" />
<line x1="418.5" y1="293" x2="418.5" y2="300" stroke="#000" stroke-width="1" />
<line x1="428.5" y1="293" x2="428.5" y2="300" stroke="#000" stroke-width="1" />
<line x1="437.5" y1="293" x2="437.5" y2="300" stroke="#000" stroke-width="1" />
<line x1="447.5" y1="293" x2="447.5" y2="300" stroke="#000" stroke-width="1" />
<line x1="456.5" y1="293" x2="456.5" y2="300" stroke="#000" stroke-width="1" />
<line x1="466.5" y1="293" x2="466.5" y2="300" stroke="#000" stroke-width="1" />
<line x1="475.5" y1="293" x2="475.5" y2="300" stroke="#000" stroke-width="1" />
<line x1="485.5" y1="293" x2="485.5" y2="300" stroke="#000" stroke-width="1" />
<line x1="494.5" y1="293" x2="494.5" y2="300" stroke="#000" stroke-width="1" />
<line x1="504.5" y1="293" x2="504.5" y2="300" stroke="#000" stroke-width="1" />
<line x1="514.5" y1="293" x2="514.5" y2="300" stroke="#000" stroke-width="1" />
<line x1="523.5" y1="293" x2="523.5" y2="300" stroke="#000" stroke-width="1" />
<line x1="533.5" y1="293" x2="533.5" y2="300" stroke="#000" stroke-width="1" />
<line x1="542.5" y1="293" x2="542.5" y2="300" stroke="#000" stroke-width="1" />
<line x1="552.5" y1="293" x2="552.5" y2="300" stroke="#000" stroke-width="1" />
<line x1="561.5" y1="293" x2="561.5" y2="300" stroke="#000" stroke-width="1" />
<line x1="571.5" y1="293" x2="571.5" y2="300" stroke="#000" stroke-width="1" />
<line x1="581.5" y1="293" x2="581.5" y2="300" stroke="#000" stroke-width="1" />
<line x1="590.5" y1="293" x2="590.5" y2="300" stroke="#000" stroke-width="1" />
<line x1="600.5" y1="289" x2="600.5" y2="304" stroke="#000" stroke-width="1" />
<line x1="181.5" y1="265" x2="181.5" y2="328" stroke="#008000" stroke-width="1" />
<text x="57" y="254" font-size="8.5" fill="#000" font-family='"Liberation Sans", sans-serif' >04</text>
<text x="185" y="254" font-size="8.5" fill="#ff0000" font-family='"Liberation Sans", sans-serif' >01</text>
<text x="463" y="254" font-size="8.5" fill="#000" font-family='"Liberation Sans", sans-serif' >07</text>
<text x="592" y="254" font-size="8.5" fill="#000" font-family='"Liberation Sans", sans-serif' >04</text>
<text x="184" y="285" font-size="8.5" fill="#000" font-family='"Liberation Sans", sans-serif' >02</text>
<text x="463" y="284" font-size="8.5" fill="#000" font-family='"Liberation Sans", sans-serif' >08</text>
<text x="45" y="287" font-size="8.5" fill="#ff0000" textLength="14" lengthAdjust="spacingAndGlyphs" font-family='"Liberation Sans", sans-serif' >62.5</text>
<text x="593" y="287" font-size="8.5" fill="#ff0000" textLength="14" lengthAdjust="spacingAndGlyphs" font-family='"Liberation Sans", sans-serif' >62.5</text>
<text x="289" y="308" font-size="8.5" fill="#ff0000" textLength="69" lengthAdjust="spacingAndGlyphs" font-family='"Liberation Sans", sans-serif' >58x2 B10 legs@175</text>
<text x="53" y="321" font-size="8.5" fill="#000" font-family='"Liberation Sans", sans-serif' >05</text>
<text x="592" y="321" font-size="8.5" fill="#000" font-family='"Liberation Sans", sans-serif' >05</text>
<text x="53" y="344" font-size="8.5" fill="#000" font-family='"Liberation Sans", sans-serif' >06</text>
<text x="97" y="344" font-size="8.5" fill="#000" font-family='"Liberation Sans", sans-serif' >03</text>
<text x="548" y="344" font-size="8.5" fill="#000" font-family='"Liberation Sans", sans-serif' >09</text>
<text x="592" y="344" font-size="8.5" fill="#000" font-family='"Liberation Sans", sans-serif' >06</text>
<rect x="40.5" y="424.5" width="573" height="9" fill="none" stroke="#3a3a3a" stroke-width="1" />
<rect x="50.5" y="425" width="2" height="8" fill="#000" />
<line x1="54.5" y1="425" x2="54.5" y2="433" stroke="#000" stroke-width="1" />
<rect x="601.5" y="425" width="2" height="8" fill="#000" />
<line x1="599.5" y1="425" x2="599.5" y2="433" stroke="#000" stroke-width="1" />
<path d="M315,416.8 H327.5 V440.3 H315 M315,416.8 L326,419.5 M315,440.3 L326,438" fill="none" stroke="#ff0000" stroke-width="1.2" shape-rendering="geometricPrecision"/>
<line x1="270" y1="454.5" x2="290" y2="454.5" stroke="#ff0000" stroke-width="1" />
<line x1="368" y1="454.5" x2="385" y2="454.5" stroke="#ff0000" stroke-width="1" />
<text x="291" y="458" font-size="9" fill="#ff0000" textLength="72" lengthAdjust="spacingAndGlyphs" font-family='"Liberation Sans", sans-serif' >Moment Capacity</text>
<line x1="270" y1="469.5" x2="290" y2="469.5" stroke="#000080" stroke-width="1" />
<line x1="368" y1="469.5" x2="385" y2="469.5" stroke="#000080" stroke-width="1" />
<text x="294" y="473" font-size="9" fill="#000080" textLength="65" lengthAdjust="spacingAndGlyphs" font-family='"Liberation Sans", sans-serif' >Moment Applied</text>
<line x1="40.5" y1="574.2" x2="40.5" y2="480.6" stroke="#101085" stroke-width="1"/>
<line x1="43.5" y1="574.2" x2="43.5" y2="484.4" stroke="#101085" stroke-width="1"/>
<line x1="46.4" y1="574.2" x2="46.4" y2="488.2" stroke="#101085" stroke-width="1"/>
<line x1="49.4" y1="574.2" x2="49.4" y2="491.9" stroke="#101085" stroke-width="1"/>
<line x1="52.3" y1="574.2" x2="52.3" y2="495.6" stroke="#101085" stroke-width="1"/>
<line x1="55.3" y1="574.2" x2="55.3" y2="499.2" stroke="#101085" stroke-width="1"/>
<line x1="58.2" y1="574.2" x2="58.2" y2="502.8" stroke="#101085" stroke-width="1"/>
<line x1="61.2" y1="574.2" x2="61.2" y2="506.4" stroke="#101085" stroke-width="1"/>
<line x1="64.1" y1="574.2" x2="64.1" y2="509.9" stroke="#101085" stroke-width="1"/>
<line x1="67.1" y1="574.2" x2="67.1" y2="513.4" stroke="#101085" stroke-width="1"/>
<line x1="70.0" y1="574.2" x2="70.0" y2="516.8" stroke="#101085" stroke-width="1"/>
<line x1="73.0" y1="574.2" x2="73.0" y2="520.2" stroke="#101085" stroke-width="1"/>
<line x1="75.9" y1="574.2" x2="75.9" y2="523.6" stroke="#101085" stroke-width="1"/>
<line x1="78.9" y1="574.2" x2="78.9" y2="526.9" stroke="#101085" stroke-width="1"/>
<line x1="81.8" y1="574.2" x2="81.8" y2="530.2" stroke="#101085" stroke-width="1"/>
<line x1="84.8" y1="574.2" x2="84.8" y2="533.4" stroke="#101085" stroke-width="1"/>
<line x1="87.7" y1="574.2" x2="87.7" y2="536.6" stroke="#101085" stroke-width="1"/>
<line x1="90.7" y1="574.2" x2="90.7" y2="539.8" stroke="#101085" stroke-width="1"/>
<line x1="93.6" y1="574.2" x2="93.6" y2="542.9" stroke="#101085" stroke-width="1"/>
<line x1="96.6" y1="574.2" x2="96.6" y2="546.0" stroke="#101085" stroke-width="1"/>
<line x1="99.5" y1="574.2" x2="99.5" y2="549.1" stroke="#101085" stroke-width="1"/>
<line x1="102.5" y1="574.2" x2="102.5" y2="552.1" stroke="#101085" stroke-width="1"/>
<line x1="105.4" y1="574.2" x2="105.4" y2="555.0" stroke="#101085" stroke-width="1"/>
<line x1="108.4" y1="574.2" x2="108.4" y2="558.0" stroke="#101085" stroke-width="1"/>
<line x1="111.3" y1="574.2" x2="111.3" y2="560.9" stroke="#101085" stroke-width="1"/>
<line x1="114.3" y1="574.2" x2="114.3" y2="563.7" stroke="#101085" stroke-width="1"/>
<line x1="117.2" y1="574.2" x2="117.2" y2="566.5" stroke="#101085" stroke-width="1"/>
<line x1="120.2" y1="574.2" x2="120.2" y2="569.3" stroke="#101085" stroke-width="1"/>
<line x1="123.1" y1="574.2" x2="123.1" y2="572.0" stroke="#101085" stroke-width="1"/>
<line x1="126.1" y1="574.2" x2="126.1" y2="574.7" stroke="#101085" stroke-width="1"/>
<line x1="129.0" y1="574.2" x2="129.0" y2="577.4" stroke="#101085" stroke-width="1"/>
<line x1="132.0" y1="574.2" x2="132.0" y2="580.0" stroke="#101085" stroke-width="1"/>
<line x1="134.9" y1="574.2" x2="134.9" y2="582.6" stroke="#101085" stroke-width="1"/>
<line x1="137.9" y1="574.2" x2="137.9" y2="585.1" stroke="#101085" stroke-width="1"/>
<line x1="140.8" y1="574.2" x2="140.8" y2="587.6" stroke="#101085" stroke-width="1"/>
<line x1="143.8" y1="574.2" x2="143.8" y2="590.1" stroke="#101085" stroke-width="1"/>
<line x1="146.7" y1="574.2" x2="146.7" y2="592.5" stroke="#101085" stroke-width="1"/>
<line x1="149.7" y1="574.2" x2="149.7" y2="594.9" stroke="#101085" stroke-width="1"/>
<line x1="152.6" y1="574.2" x2="152.6" y2="597.2" stroke="#101085" stroke-width="1"/>
<line x1="155.5" y1="574.2" x2="155.5" y2="599.5" stroke="#101085" stroke-width="1"/>
<line x1="158.5" y1="574.2" x2="158.5" y2="601.8" stroke="#101085" stroke-width="1"/>
<line x1="161.4" y1="574.2" x2="161.4" y2="604.0" stroke="#101085" stroke-width="1"/>
<line x1="164.4" y1="574.2" x2="164.4" y2="606.2" stroke="#101085" stroke-width="1"/>
<line x1="167.3" y1="574.2" x2="167.3" y2="608.3" stroke="#101085" stroke-width="1"/>
<line x1="170.3" y1="574.2" x2="170.3" y2="610.4" stroke="#101085" stroke-width="1"/>
<line x1="173.2" y1="574.2" x2="173.2" y2="612.5" stroke="#101085" stroke-width="1"/>
<line x1="176.2" y1="574.2" x2="176.2" y2="614.5" stroke="#101085" stroke-width="1"/>
<line x1="179.1" y1="574.2" x2="179.1" y2="616.5" stroke="#101085" stroke-width="1"/>
<line x1="182.1" y1="574.2" x2="182.1" y2="618.4" stroke="#101085" stroke-width="1"/>
<line x1="185.0" y1="574.2" x2="185.0" y2="620.3" stroke="#101085" stroke-width="1"/>
<line x1="188.0" y1="574.2" x2="188.0" y2="622.2" stroke="#101085" stroke-width="1"/>
<line x1="190.9" y1="574.2" x2="190.9" y2="624.0" stroke="#101085" stroke-width="1"/>
<line x1="193.9" y1="574.2" x2="193.9" y2="625.8" stroke="#101085" stroke-width="1"/>
<line x1="196.8" y1="574.2" x2="196.8" y2="627.6" stroke="#101085" stroke-width="1"/>
<line x1="199.8" y1="574.2" x2="199.8" y2="629.3" stroke="#101085" stroke-width="1"/>
<line x1="202.7" y1="574.2" x2="202.7" y2="631.0" stroke="#101085" stroke-width="1"/>
<line x1="205.7" y1="574.2" x2="205.7" y2="632.6" stroke="#101085" stroke-width="1"/>
<line x1="208.6" y1="574.2" x2="208.6" y2="634.2" stroke="#101085" stroke-width="1"/>
<line x1="211.6" y1="574.2" x2="211.6" y2="635.8" stroke="#101085" stroke-width="1"/>
<line x1="214.5" y1="574.2" x2="214.5" y2="637.3" stroke="#101085" stroke-width="1"/>
<line x1="217.5" y1="574.2" x2="217.5" y2="638.8" stroke="#101085" stroke-width="1"/>
<line x1="220.4" y1="574.2" x2="220.4" y2="640.2" stroke="#101085" stroke-width="1"/>
<line x1="223.4" y1="574.2" x2="223.4" y2="641.6" stroke="#101085" stroke-width="1"/>
<line x1="226.3" y1="574.2" x2="226.3" y2="642.9" stroke="#101085" stroke-width="1"/>
<line x1="229.3" y1="574.2" x2="229.3" y2="644.3" stroke="#101085" stroke-width="1"/>
<line x1="232.2" y1="574.2" x2="232.2" y2="645.5" stroke="#101085" stroke-width="1"/>
<line x1="235.2" y1="574.2" x2="235.2" y2="646.8" stroke="#101085" stroke-width="1"/>
<line x1="238.1" y1="574.2" x2="238.1" y2="648.0" stroke="#101085" stroke-width="1"/>
<line x1="241.1" y1="574.2" x2="241.1" y2="649.2" stroke="#101085" stroke-width="1"/>
<line x1="244.0" y1="574.2" x2="244.0" y2="650.3" stroke="#101085" stroke-width="1"/>
<line x1="247.0" y1="574.2" x2="247.0" y2="651.4" stroke="#101085" stroke-width="1"/>
<line x1="249.9" y1="574.2" x2="249.9" y2="652.4" stroke="#101085" stroke-width="1"/>
<line x1="252.9" y1="574.2" x2="252.9" y2="653.4" stroke="#101085" stroke-width="1"/>
<line x1="255.8" y1="574.2" x2="255.8" y2="654.4" stroke="#101085" stroke-width="1"/>
<line x1="258.8" y1="574.2" x2="258.8" y2="655.3" stroke="#101085" stroke-width="1"/>
<line x1="261.7" y1="574.2" x2="261.7" y2="656.2" stroke="#101085" stroke-width="1"/>
<line x1="264.7" y1="574.2" x2="264.7" y2="657.0" stroke="#101085" stroke-width="1"/>
<line x1="267.6" y1="574.2" x2="267.6" y2="657.9" stroke="#101085" stroke-width="1"/>
<line x1="270.6" y1="574.2" x2="270.6" y2="658.6" stroke="#101085" stroke-width="1"/>
<line x1="273.5" y1="574.2" x2="273.5" y2="659.4" stroke="#101085" stroke-width="1"/>
<line x1="276.5" y1="574.2" x2="276.5" y2="660.0" stroke="#101085" stroke-width="1"/>
<line x1="279.4" y1="574.2" x2="279.4" y2="660.7" stroke="#101085" stroke-width="1"/>
<line x1="282.4" y1="574.2" x2="282.4" y2="661.3" stroke="#101085" stroke-width="1"/>
<line x1="285.3" y1="574.2" x2="285.3" y2="661.9" stroke="#101085" stroke-width="1"/>
<line x1="288.3" y1="574.2" x2="288.3" y2="662.4" stroke="#101085" stroke-width="1"/>
<line x1="291.2" y1="574.2" x2="291.2" y2="662.9" stroke="#101085" stroke-width="1"/>
<line x1="294.2" y1="574.2" x2="294.2" y2="663.4" stroke="#101085" stroke-width="1"/>
<line x1="297.1" y1="574.2" x2="297.1" y2="663.8" stroke="#101085" stroke-width="1"/>
<line x1="300.1" y1="574.2" x2="300.1" y2="664.2" stroke="#101085" stroke-width="1"/>
<line x1="303.0" y1="574.2" x2="303.0" y2="664.5" stroke="#101085" stroke-width="1"/>
<line x1="306.0" y1="574.2" x2="306.0" y2="664.8" stroke="#101085" stroke-width="1"/>
<line x1="308.9" y1="574.2" x2="308.9" y2="665.1" stroke="#101085" stroke-width="1"/>
<line x1="311.9" y1="574.2" x2="311.9" y2="665.3" stroke="#101085" stroke-width="1"/>
<line x1="314.8" y1="574.2" x2="314.8" y2="665.5" stroke="#101085" stroke-width="1"/>
<line x1="317.8" y1="574.2" x2="317.8" y2="665.6" stroke="#101085" stroke-width="1"/>
<line x1="320.7" y1="574.2" x2="320.7" y2="665.7" stroke="#101085" stroke-width="1"/>
<line x1="323.7" y1="574.2" x2="323.7" y2="665.8" stroke="#101085" stroke-width="1"/>
<line x1="326.6" y1="574.2" x2="326.6" y2="665.8" stroke="#101085" stroke-width="1"/>
<line x1="329.6" y1="574.2" x2="329.6" y2="665.8" stroke="#101085" stroke-width="1"/>
<line x1="332.5" y1="574.2" x2="332.5" y2="665.7" stroke="#101085" stroke-width="1"/>
<line x1="335.5" y1="574.2" x2="335.5" y2="665.6" stroke="#101085" stroke-width="1"/>
<line x1="338.4" y1="574.2" x2="338.4" y2="665.5" stroke="#101085" stroke-width="1"/>
<line x1="341.4" y1="574.2" x2="341.4" y2="665.3" stroke="#101085" stroke-width="1"/>
<line x1="344.3" y1="574.2" x2="344.3" y2="665.1" stroke="#101085" stroke-width="1"/>
<line x1="347.3" y1="574.2" x2="347.3" y2="664.9" stroke="#101085" stroke-width="1"/>
<line x1="350.2" y1="574.2" x2="350.2" y2="664.6" stroke="#101085" stroke-width="1"/>
<line x1="353.2" y1="574.2" x2="353.2" y2="664.3" stroke="#101085" stroke-width="1"/>
<line x1="356.1" y1="574.2" x2="356.1" y2="663.9" stroke="#101085" stroke-width="1"/>
<line x1="359.1" y1="574.2" x2="359.1" y2="663.5" stroke="#101085" stroke-width="1"/>
<line x1="362.0" y1="574.2" x2="362.0" y2="663.0" stroke="#101085" stroke-width="1"/>
<line x1="365.0" y1="574.2" x2="365.0" y2="662.5" stroke="#101085" stroke-width="1"/>
<line x1="367.9" y1="574.2" x2="367.9" y2="662.0" stroke="#101085" stroke-width="1"/>
<line x1="370.9" y1="574.2" x2="370.9" y2="661.5" stroke="#101085" stroke-width="1"/>
<line x1="373.8" y1="574.2" x2="373.8" y2="660.8" stroke="#101085" stroke-width="1"/>
<line x1="376.8" y1="574.2" x2="376.8" y2="660.2" stroke="#101085" stroke-width="1"/>
<line x1="379.7" y1="574.2" x2="379.7" y2="659.5" stroke="#101085" stroke-width="1"/>
<line x1="382.7" y1="574.2" x2="382.7" y2="658.8" stroke="#101085" stroke-width="1"/>
<line x1="385.6" y1="574.2" x2="385.6" y2="658.0" stroke="#101085" stroke-width="1"/>
<line x1="388.6" y1="574.2" x2="388.6" y2="657.2" stroke="#101085" stroke-width="1"/>
<line x1="391.5" y1="574.2" x2="391.5" y2="656.4" stroke="#101085" stroke-width="1"/>
<line x1="394.5" y1="574.2" x2="394.5" y2="655.5" stroke="#101085" stroke-width="1"/>
<line x1="397.4" y1="574.2" x2="397.4" y2="654.6" stroke="#101085" stroke-width="1"/>
<line x1="400.4" y1="574.2" x2="400.4" y2="653.6" stroke="#101085" stroke-width="1"/>
<line x1="403.3" y1="574.2" x2="403.3" y2="652.7" stroke="#101085" stroke-width="1"/>
<line x1="406.3" y1="574.2" x2="406.3" y2="651.6" stroke="#101085" stroke-width="1"/>
<line x1="409.2" y1="574.2" x2="409.2" y2="650.5" stroke="#101085" stroke-width="1"/>
<line x1="412.2" y1="574.2" x2="412.2" y2="649.4" stroke="#101085" stroke-width="1"/>
<line x1="415.1" y1="574.2" x2="415.1" y2="648.3" stroke="#101085" stroke-width="1"/>
<line x1="418.1" y1="574.2" x2="418.1" y2="647.1" stroke="#101085" stroke-width="1"/>
<line x1="421.0" y1="574.2" x2="421.0" y2="645.8" stroke="#101085" stroke-width="1"/>
<line x1="424.0" y1="574.2" x2="424.0" y2="644.6" stroke="#101085" stroke-width="1"/>
<line x1="426.9" y1="574.2" x2="426.9" y2="643.3" stroke="#101085" stroke-width="1"/>
<line x1="429.9" y1="574.2" x2="429.9" y2="641.9" stroke="#101085" stroke-width="1"/>
<line x1="432.8" y1="574.2" x2="432.8" y2="640.5" stroke="#101085" stroke-width="1"/>
<line x1="435.8" y1="574.2" x2="435.8" y2="639.1" stroke="#101085" stroke-width="1"/>
<line x1="438.7" y1="574.2" x2="438.7" y2="637.6" stroke="#101085" stroke-width="1"/>
<line x1="441.7" y1="574.2" x2="441.7" y2="636.1" stroke="#101085" stroke-width="1"/>
<line x1="444.6" y1="574.2" x2="444.6" y2="634.6" stroke="#101085" stroke-width="1"/>
<line x1="447.6" y1="574.2" x2="447.6" y2="633.0" stroke="#101085" stroke-width="1"/>
<line x1="450.5" y1="574.2" x2="450.5" y2="631.4" stroke="#101085" stroke-width="1"/>
<line x1="453.5" y1="574.2" x2="453.5" y2="629.7" stroke="#101085" stroke-width="1"/>
<line x1="456.4" y1="574.2" x2="456.4" y2="628.0" stroke="#101085" stroke-width="1"/>
<line x1="459.4" y1="574.2" x2="459.4" y2="626.3" stroke="#101085" stroke-width="1"/>
<line x1="462.3" y1="574.2" x2="462.3" y2="624.5" stroke="#101085" stroke-width="1"/>
<line x1="465.3" y1="574.2" x2="465.3" y2="622.7" stroke="#101085" stroke-width="1"/>
<line x1="468.2" y1="574.2" x2="468.2" y2="620.8" stroke="#101085" stroke-width="1"/>
<line x1="471.2" y1="574.2" x2="471.2" y2="618.9" stroke="#101085" stroke-width="1"/>
<line x1="474.1" y1="574.2" x2="474.1" y2="617.0" stroke="#101085" stroke-width="1"/>
<line x1="477.1" y1="574.2" x2="477.1" y2="615.0" stroke="#101085" stroke-width="1"/>
<line x1="480.0" y1="574.2" x2="480.0" y2="613.0" stroke="#101085" stroke-width="1"/>
<line x1="483.0" y1="574.2" x2="483.0" y2="610.9" stroke="#101085" stroke-width="1"/>
<line x1="485.9" y1="574.2" x2="485.9" y2="608.8" stroke="#101085" stroke-width="1"/>
<line x1="488.9" y1="574.2" x2="488.9" y2="606.7" stroke="#101085" stroke-width="1"/>
<line x1="491.8" y1="574.2" x2="491.8" y2="604.5" stroke="#101085" stroke-width="1"/>
<line x1="494.8" y1="574.2" x2="494.8" y2="602.3" stroke="#101085" stroke-width="1"/>
<line x1="497.7" y1="574.2" x2="497.7" y2="600.0" stroke="#101085" stroke-width="1"/>
<line x1="500.7" y1="574.2" x2="500.7" y2="597.7" stroke="#101085" stroke-width="1"/>
<line x1="503.6" y1="574.2" x2="503.6" y2="595.4" stroke="#101085" stroke-width="1"/>
<line x1="506.6" y1="574.2" x2="506.6" y2="593.0" stroke="#101085" stroke-width="1"/>
<line x1="509.5" y1="574.2" x2="509.5" y2="590.6" stroke="#101085" stroke-width="1"/>
<line x1="512.5" y1="574.2" x2="512.5" y2="588.2" stroke="#101085" stroke-width="1"/>
<line x1="515.4" y1="574.2" x2="515.4" y2="585.7" stroke="#101085" stroke-width="1"/>
<line x1="518.4" y1="574.2" x2="518.4" y2="583.2" stroke="#101085" stroke-width="1"/>
<line x1="521.3" y1="574.2" x2="521.3" y2="580.6" stroke="#101085" stroke-width="1"/>
<line x1="524.3" y1="574.2" x2="524.3" y2="578.0" stroke="#101085" stroke-width="1"/>
<line x1="527.2" y1="574.2" x2="527.2" y2="575.3" stroke="#101085" stroke-width="1"/>
<line x1="530.2" y1="574.2" x2="530.2" y2="572.7" stroke="#101085" stroke-width="1"/>
<line x1="533.1" y1="574.2" x2="533.1" y2="569.9" stroke="#101085" stroke-width="1"/>
<line x1="536.1" y1="574.2" x2="536.1" y2="567.2" stroke="#101085" stroke-width="1"/>
<line x1="539.0" y1="574.2" x2="539.0" y2="564.4" stroke="#101085" stroke-width="1"/>
<line x1="542.0" y1="574.2" x2="542.0" y2="561.5" stroke="#101085" stroke-width="1"/>
<line x1="544.9" y1="574.2" x2="544.9" y2="558.6" stroke="#101085" stroke-width="1"/>
<line x1="547.9" y1="574.2" x2="547.9" y2="555.7" stroke="#101085" stroke-width="1"/>
<line x1="550.8" y1="574.2" x2="550.8" y2="552.8" stroke="#101085" stroke-width="1"/>
<line x1="553.8" y1="574.2" x2="553.8" y2="549.8" stroke="#101085" stroke-width="1"/>
<line x1="556.7" y1="574.2" x2="556.7" y2="546.7" stroke="#101085" stroke-width="1"/>
<line x1="559.7" y1="574.2" x2="559.7" y2="543.7" stroke="#101085" stroke-width="1"/>
<line x1="562.6" y1="574.2" x2="562.6" y2="540.5" stroke="#101085" stroke-width="1"/>
<line x1="565.6" y1="574.2" x2="565.6" y2="537.4" stroke="#101085" stroke-width="1"/>
<line x1="568.5" y1="574.2" x2="568.5" y2="534.2" stroke="#101085" stroke-width="1"/>
<line x1="571.5" y1="574.2" x2="571.5" y2="531.0" stroke="#101085" stroke-width="1"/>
<line x1="574.4" y1="574.2" x2="574.4" y2="527.7" stroke="#101085" stroke-width="1"/>
<line x1="577.4" y1="574.2" x2="577.4" y2="524.4" stroke="#101085" stroke-width="1"/>
<line x1="580.3" y1="574.2" x2="580.3" y2="521.0" stroke="#101085" stroke-width="1"/>
<line x1="583.3" y1="574.2" x2="583.3" y2="517.6" stroke="#101085" stroke-width="1"/>
<line x1="586.2" y1="574.2" x2="586.2" y2="514.2" stroke="#101085" stroke-width="1"/>
<line x1="589.2" y1="574.2" x2="589.2" y2="510.7" stroke="#101085" stroke-width="1"/>
<line x1="592.1" y1="574.2" x2="592.1" y2="507.2" stroke="#101085" stroke-width="1"/>
<line x1="595.1" y1="574.2" x2="595.1" y2="503.7" stroke="#101085" stroke-width="1"/>
<line x1="598.0" y1="574.2" x2="598.0" y2="500.1" stroke="#101085" stroke-width="1"/>
<line x1="601.0" y1="574.2" x2="601.0" y2="496.5" stroke="#101085" stroke-width="1"/>
<line x1="604.0" y1="574.2" x2="604.0" y2="492.8" stroke="#101085" stroke-width="1"/>
<line x1="606.9" y1="574.2" x2="606.9" y2="489.1" stroke="#101085" stroke-width="1"/>
<line x1="609.9" y1="574.2" x2="609.9" y2="485.3" stroke="#101085" stroke-width="1"/>
<line x1="612.8" y1="574.2" x2="612.8" y2="481.6" stroke="#101085" stroke-width="1"/>
<polyline points="40,480.0 42,482.6 44,485.1 46,487.7 48,490.2 50,492.7 52,495.2 54,497.7 56,500.1 58,502.6 60,505.0 62,507.4 64,509.8 66,512.1 68,514.5 70,516.8 72,519.1 74,521.4 76,523.7 78,525.9 80,528.2 82,530.4 84,532.6 86,534.8 88,537.0 90,539.1 92,541.2 94,543.3 96,545.4 98,547.5 100,549.6 102,551.6 104,553.6 106,555.6 108,557.6 110,559.6 112,561.5 114,563.5 116,565.4 118,567.3 120,569.1 122,571.0 124,572.8 126,574.7 128,576.5 130,578.3 132,580.0 134,581.8 136,583.5 138,585.2 140,586.9 142,588.6 144,590.3 146,591.9 148,593.5 150,595.1 152,596.7 154,598.3 156,599.8 158,601.4 160,602.9 162,604.4 164,605.9 166,607.3 168,608.8 170,610.2 172,611.6 174,613.0 176,614.4 178,615.7 180,617.1 182,618.4 184,619.7 186,621.0 188,622.2 190,623.5 192,624.7 194,625.9 196,627.1 198,628.3 200,629.4 202,630.6 204,631.7 206,632.8 208,633.9 210,634.9 212,636.0 214,637.0 216,638.0 218,639.0 220,640.0 222,640.9 224,641.9 226,642.8 228,643.7 230,644.6 232,645.4 234,646.3 236,647.1 238,647.9 240,648.7 242,649.5 244,650.3 246,651.0 248,651.7 250,652.4 252,653.1 254,653.8 256,654.4 258,655.1 260,655.7 262,656.3 264,656.8 266,657.4 268,657.9 270,658.5 272,659.0 274,659.5 276,659.9 278,660.4 280,660.8 282,661.2 284,661.6 286,662.0 288,662.4 290,662.7 292,663.0 294,663.3 296,663.6 298,663.9 300,664.2 302,664.4 304,664.6 306,664.8 308,665.0 310,665.1 312,665.3 314,665.4 316,665.5 318,665.6 320,665.7 322,665.7 324,665.8 326,665.8 328,665.8 330,665.8 332,665.7 334,665.7 336,665.6 338,665.5 340,665.4 342,665.3 344,665.1 346,665.0 348,664.8 350,664.6 352,664.4 354,664.2 356,663.9 358,663.6 360,663.3 362,663.0 364,662.7 366,662.4 368,662.0 370,661.6 372,661.2 374,660.8 376,660.4 378,659.9 380,659.5 382,659.0 384,658.5 386,657.9 388,657.4 390,656.8 392,656.3 394,655.7 396,655.1 398,654.4 400,653.8 402,653.1 404,652.4 406,651.7 408,651.0 410,650.3 412,649.5 414,648.7 416,647.9 418,647.1 420,646.3 422,645.4 424,644.6 426,643.7 428,642.8 430,641.9 432,640.9 434,640.0 436,639.0 438,638.0 440,637.0 442,636.0 444,634.9 446,633.9 448,632.8 450,631.7 452,630.6 454,629.4 456,628.3 458,627.1 460,625.9 462,624.7 464,623.5 466,622.2 468,621.0 470,619.7 472,618.4 474,617.1 476,615.7 478,614.4 480,613.0 482,611.6 484,610.2 486,608.8 488,607.3 490,605.9 492,604.4 494,602.9 496,601.4 498,599.8 500,598.3 502,596.7 504,595.1 506,593.5 508,591.9 510,590.3 512,588.6 514,586.9 516,585.2 518,583.5 520,581.8 522,580.0 524,578.3 526,576.5 528,574.7 530,572.8 532,571.0 534,569.1 536,567.3 538,565.4 540,563.5 542,561.5 544,559.6 546,557.6 548,555.6 550,553.6 552,551.6 554,549.6 556,547.5 558,545.4 560,543.3 562,541.2 564,539.1 566,537.0 568,534.8 570,532.6 572,530.4 574,528.2 576,525.9 578,523.7 580,521.4 582,519.1 584,516.8 586,514.5 588,512.1 590,509.8 592,507.4 594,505.0 596,502.6 598,500.1 600,497.7 602,495.2 604,492.7 606,490.2 608,487.7 610,485.1 612,482.6 614,480.0" fill="none" stroke="#000080" stroke-width="1.15" shape-rendering="geometricPrecision"/>
<line x1="40" y1="574.5" x2="614" y2="574.5" stroke="#000080" stroke-width="1.2" />
<line x1="40.5" y1="463" x2="40.5" y2="620" stroke="#4040a0" stroke-width="1" />
<line x1="614.5" y1="463" x2="614.5" y2="620" stroke="#4040a0" stroke-width="1" />
<line x1="40.5" y1="480" x2="40.5" y2="574" stroke="#000080" stroke-width="2" />
<line x1="614.5" y1="480" x2="614.5" y2="574" stroke="#000080" stroke-width="2" />
<path d="M40.5,463.5 H55.5 V457.5 H153.5 V487.5 H156.5 V528.5 H497.5 V487.5 H500.5 V457.5 H598.5 V463.5 H614.5" fill="none" stroke="#ff0000" stroke-width="1" />
<path d="M40.5,620.5 H91.5 V695.5 M102.5,695.5 V687.5 H157 V688.5 H497 V687.5 H551.5 V695.5 M562.5,695.5 V620.5 H614.5" fill="none" stroke="#ff0000" stroke-width="1" />
<rect x="318.6" y="662.5" width="21" height="12" fill="#ffffff" />
<rect x="318.6" y="680" width="21" height="12" fill="#ffffff" />
<line x1="91" y1="695.5" x2="103" y2="695.5" stroke="#008000" stroke-width="1" />
<line x1="551" y1="695.5" x2="563" y2="695.5" stroke="#008000" stroke-width="1" />
<text x="15" y="481" font-size="9" fill="#ff0000" textLength="14" lengthAdjust="spacingAndGlyphs" font-family='"Liberation Sans", sans-serif' >521</text>
<text x="621" y="481" font-size="9" fill="#ff0000" textLength="14" lengthAdjust="spacingAndGlyphs" font-family='"Liberation Sans", sans-serif' >521</text>
<rect x="18" y="485.5" width="1" height="1.5" fill="#4060d0" />
<rect x="23" y="485.5" width="1" height="1.5" fill="#4060d0" />
<rect x="28" y="485.5" width="1" height="1.5" fill="#4060d0" />
<rect x="624" y="485.5" width="1" height="1.5" fill="#4060d0" />
<rect x="629" y="485.5" width="1" height="1.5" fill="#4060d0" />
<rect x="634" y="485.5" width="1" height="1.5" fill="#4060d0" />
<text x="25" y="583" font-size="9" fill="#ff0000" textLength="5" lengthAdjust="spacingAndGlyphs" font-family='"Liberation Sans", sans-serif' >3</text>
<text x="15" y="621" font-size="9" fill="#ff0000" textLength="14" lengthAdjust="spacingAndGlyphs" font-family='"Liberation Sans", sans-serif' >217</text>
<text x="621" y="621" font-size="9" fill="#ff0000" textLength="14" lengthAdjust="spacingAndGlyphs" font-family='"Liberation Sans", sans-serif' >217</text>
<text x="320" y="547" font-size="9" fill="#ff0000" textLength="15" lengthAdjust="spacingAndGlyphs" font-family='"Liberation Sans", sans-serif' >217</text>
<text x="320" y="673" font-size="9" fill="#000080" textLength="15" lengthAdjust="spacingAndGlyphs" font-family='"Liberation Sans", sans-serif' >431</text>
<text x="320" y="689" font-size="9" fill="#ff0000" textLength="15" lengthAdjust="spacingAndGlyphs" font-family='"Liberation Sans", sans-serif' >535</text>
<text x="13.6" y="739" font-size="11" fill="#ff0000" textLength="6.7" lengthAdjust="spacingAndGlyphs" font-family='"Liberation Sans", sans-serif' >*</text>
<text x="21.8" y="739" font-size="11" fill="#ff0000" textLength="18.2" lengthAdjust="spacingAndGlyphs" font-family='"Liberation Sans", sans-serif' >Bar</text>
<text x="41.4" y="739" font-size="11" fill="#ff0000" textLength="23.1" lengthAdjust="spacingAndGlyphs" font-family='"Liberation Sans", sans-serif' >mark</text>
<text x="66.8" y="739" font-size="11" fill="#ff0000" textLength="41.9" lengthAdjust="spacingAndGlyphs" font-family='"Liberation Sans", sans-serif' >numbers</text>
<text x="111.0" y="739" font-size="11" fill="#ff0000" textLength="45.2" lengthAdjust="spacingAndGlyphs" font-family='"Liberation Sans", sans-serif' >displayed</text>
<text x="158.4" y="739" font-size="11" fill="#ff0000" textLength="12.5" lengthAdjust="spacingAndGlyphs" font-family='"Liberation Sans", sans-serif' >on</text>
<text x="173.2" y="739" font-size="11" fill="#ff0000" textLength="33.7" lengthAdjust="spacingAndGlyphs" font-family='"Liberation Sans", sans-serif' >screen</text>
<text x="209.0" y="739" font-size="11" fill="#ff0000" textLength="17.0" lengthAdjust="spacingAndGlyphs" font-family='"Liberation Sans", sans-serif' >are</text>
<text x="227.5" y="739" font-size="11" fill="#ff0000" textLength="22.3" lengthAdjust="spacingAndGlyphs" font-family='"Liberation Sans", sans-serif' >local</text>
<text x="252.1" y="739" font-size="11" fill="#ff0000" textLength="18.1" lengthAdjust="spacingAndGlyphs" font-family='"Liberation Sans", sans-serif' >and</text>
<text x="273.3" y="739" font-size="11" fill="#ff0000" textLength="14.9" lengthAdjust="spacingAndGlyphs" font-family='"Liberation Sans", sans-serif' >for</text>
<text x="289.7" y="739" font-size="11" fill="#ff0000" textLength="54.2" lengthAdjust="spacingAndGlyphs" font-family='"Liberation Sans", sans-serif' >curtailment</text>
<text x="345.3" y="739" font-size="11" fill="#ff0000" textLength="44.4" lengthAdjust="spacingAndGlyphs" font-family='"Liberation Sans", sans-serif' >guidence</text>
<text x="392.0" y="739" font-size="11" fill="#ff0000" textLength="23.9" lengthAdjust="spacingAndGlyphs" font-family='"Liberation Sans", sans-serif' >only.</text>
<polygon points="652,191.5 664,180 676,191.5" fill="#7a7a7a" shape-rendering="geometricPrecision"/>
<rect x="655" y="191" width="18" height="14" fill="#7a7a7a" />
<rect x="663" y="199" width="2" height="6" fill="#ffffff" />
<line x1="785.8" y1="226.4" x2="1216.0" y2="350.5127" stroke="#2a2a2a" stroke-width="1.1" shape-rendering="geometricPrecision"/>
<line x1="713.5" y1="288.5" x2="1144.7" y2="411.52136" stroke="#2a2a2a" stroke-width="1.1" shape-rendering="geometricPrecision"/>
<line x1="785.8" y1="226.4" x2="713.5" y2="288.5" stroke="#2a2a2a" stroke-width="1.1" shape-rendering="geometricPrecision"/>
<line x1="928.3" y1="267.51125" x2="858.0" y2="329.72585" stroke="#2a2a2a" stroke-width="1.1" shape-rendering="geometricPrecision"/>
<line x1="1071.7" y1="308.88215" x2="1001.7" y2="370.72346000000005" stroke="#2a2a2a" stroke-width="1.1" shape-rendering="geometricPrecision"/>
<line x1="1216.0" y1="350.5127" x2="1144.7" y2="411.52136" stroke="#2a2a2a" stroke-width="1.1" shape-rendering="geometricPrecision"/>
<line x1="785.8" y1="370.1" x2="1216.0" y2="494.21270000000004" stroke="#2a2a2a" stroke-width="1.1" shape-rendering="geometricPrecision"/>
<line x1="713.5" y1="431.8" x2="1144.7" y2="554.82136" stroke="#2a2a2a" stroke-width="1.1" shape-rendering="geometricPrecision"/>
<line x1="785.8" y1="370.1" x2="713.5" y2="431.8" stroke="#2a2a2a" stroke-width="1.1" shape-rendering="geometricPrecision"/>
<line x1="928.3" y1="411.21125" x2="858.0" y2="473.02585" stroke="#2a2a2a" stroke-width="1.1" shape-rendering="geometricPrecision"/>
<line x1="1071.7" y1="452.58215000000007" x2="1001.7" y2="514.02346" stroke="#2a2a2a" stroke-width="1.1" shape-rendering="geometricPrecision"/>
<line x1="1216.0" y1="494.21270000000004" x2="1144.7" y2="554.82136" stroke="#2a2a2a" stroke-width="1.1" shape-rendering="geometricPrecision"/>
<line x1="713.5" y1="288.5" x2="713.5" y2="575" stroke="#808080" stroke-width="1.5" shape-rendering="geometricPrecision"/>
<line x1="785.8" y1="226.4" x2="785.8" y2="513" stroke="#808080" stroke-width="1.5" shape-rendering="geometricPrecision"/>
<line x1="1144.7" y1="411.5" x2="1144.7" y2="699.3" stroke="#808080" stroke-width="1.5" shape-rendering="geometricPrecision"/>
<line x1="1216" y1="350.5" x2="1216" y2="638.5" stroke="#808080" stroke-width="1.5" shape-rendering="geometricPrecision"/>
<rect x="712.8" y="575" width="1.4" height="1.5" fill="#4040ff" />
<rect x="785.0999999999999" y="513" width="1.4" height="1.5" fill="#4040ff" />
<rect x="1144.0" y="699.3" width="1.4" height="1.5" fill="#4040ff" />
<rect x="1215.3" y="638.5" width="1.4" height="1.5" fill="#4040ff" />
<polygon points="709.2,421.1 719.4,413.5 1147.5,536.6 1140.3,543.8" fill="#c80000" shape-rendering="geometricPrecision"/>
<polygon points="709.2,421.1 1140.3,543.8 1140.3,574.8 709.2,449.9" fill="#cc0000" shape-rendering="geometricPrecision"/>
<polygon points="1140.3,543.8 1147.5,536.6 1147.5,567.5 1140.3,574.8" fill="#7a0000" shape-rendering="geometricPrecision"/>
<line x1="709.2" y1="421.1" x2="1140.3" y2="543.8" stroke="#5a1010" stroke-width="1" shape-rendering="geometricPrecision"/>
<line x1="719.4" y1="413.5" x2="1147.5" y2="536.6" stroke="#8a1010" stroke-width="0.8" shape-rendering="geometricPrecision"/>
<line x1="852.3" y1="462.6" x2="852.3" y2="491" stroke="#3a0000" stroke-width="1" shape-rendering="geometricPrecision"/>
<line x1="852.3" y1="462.6" x2="862.1" y2="454.6" stroke="#3a0000" stroke-width="1" shape-rendering="geometricPrecision"/>
<line x1="996.4" y1="503.8" x2="996.4" y2="532.9" stroke="#3a0000" stroke-width="1" shape-rendering="geometricPrecision"/>
<line x1="996.4" y1="503.8" x2="1005.5" y2="496.5" stroke="#3a0000" stroke-width="1" shape-rendering="geometricPrecision"/>
<line x1="714.7" y1="432" x2="857.8" y2="472.8" stroke="#ff2020" stroke-width="1.2" shape-rendering="geometricPrecision"/>
<line x1="709.2" y1="421.1" x2="709.2" y2="449.9" stroke="#5a1010" stroke-width="1" shape-rendering="geometricPrecision"/>
<line x1="1140.3" y1="543.8" x2="1140.3" y2="574.8" stroke="#3a0000" stroke-width="1" shape-rendering="geometricPrecision"/>
<polygon points="684.7,233.5 736.9,247.5 737,300.5 684.7,285.7" fill="#b4b4b4" stroke="#9a9a9a" stroke-width="1" shape-rendering="geometricPrecision"/>
<polygon points="684.7,233.5 715.1,207 767,221.8 736.9,247.5" fill="#b8b8b8" stroke="#9a9a9a" stroke-width="1" shape-rendering="geometricPrecision"/>
<polygon points="736.9,247.5 767,221.8 767,275.6 737,300.5" fill="#b0b0b0" stroke="#9a9a9a" stroke-width="1" shape-rendering="geometricPrecision"/>
<text x="0" y="0" font-size="12.5" font-family='"Liberation Sans", sans-serif' fill="#111" transform="matrix(1,0.268,0,1,693,267)" textLength="35" lengthAdjust="spacingAndGlyphs" shape-rendering="geometricPrecision">Front</text>
<text x="0" y="0" font-size="11.5" font-family='"Liberation Sans", sans-serif' fill="#111" transform="matrix(1,0.268,-0.754,0.657,711.5,227.5)" textLength="22" lengthAdjust="spacingAndGlyphs" shape-rendering="geometricPrecision">Top</text>
<text x="0" y="0" font-size="11" font-family='"Liberation Sans", sans-serif' fill="#111" transform="matrix(0.85,-0.73,0,1,742,273)" textLength="22" lengthAdjust="spacingAndGlyphs" shape-rendering="geometricPrecision">Right</text>
<line x1="1208.7" y1="676.8" x2="1208.7" y2="638" stroke="#40a040" stroke-width="1.2" shape-rendering="geometricPrecision"/>
<polygon points="1207,640 1208.7,633.5 1210.4,640" fill="#006000" shape-rendering="geometricPrecision"/>
<line x1="1208.7" y1="676.8" x2="1230" y2="658" stroke="#2020ff" stroke-width="1.2" shape-rendering="geometricPrecision"/>
<polygon points="1227.5,657.5 1234,654 1231,660.5" fill="#0000c0" shape-rendering="geometricPrecision"/>
<line x1="1208.7" y1="676.8" x2="1248" y2="688" stroke="#ff2020" stroke-width="1.2" shape-rendering="geometricPrecision"/>
<polygon points="1245.5,686 1253,689.5 1245,689.5" fill="#c00000" shape-rendering="geometricPrecision"/>
<text x="1212" y="645" font-size="10" fill="#222" textLength="7" lengthAdjust="spacingAndGlyphs" font-family='"Liberation Sans", sans-serif' >Y</text>
<text x="1237" y="666" font-size="10" fill="#222" textLength="7" lengthAdjust="spacingAndGlyphs" font-family='"Liberation Sans", sans-serif' >Z</text>
<text x="1255" y="700" font-size="10" fill="#222" textLength="7" lengthAdjust="spacingAndGlyphs" font-family='"Liberation Sans", sans-serif' >X</text>
<path d="M8,938 V755 Q8,751 12,751 H30 Q34,751 34,755 V938 Z" fill="#f7f7f7" shape-rendering="geometricPrecision"/>
<line x1="34.5" y1="755" x2="34.5" y2="926" stroke="#ececec" stroke-width="1" />
<line x1="34.5" y1="926" x2="34.5" y2="936" stroke="#a8a8a8" stroke-width="1" />
<rect x="13.5" y="761.5" width="14" height="9" fill="#e8eef8" stroke="#4a6fa0" stroke-width="1" />
<line x1="16" y1="764.5" x2="25" y2="764.5" stroke="#7a9ac0" stroke-width="1" />
<line x1="16" y1="767.0" x2="25" y2="767.0" stroke="#7a9ac0" stroke-width="1" />
<line x1="16" y1="769.5" x2="25" y2="769.5" stroke="#7a9ac0" stroke-width="1" />
<polygon points="15,762 21,757 27,760 24,764" fill="#e0b060" shape-rendering="geometricPrecision"/>
<rect x="26" y="757" width="3" height="5" fill="#40a040" />
<polygon points="19,782 26,782 21,788 25,788 14,798 18,791 13,791" fill="#f4e030" stroke="#202020" stroke-width="1" shape-rendering="geometricPrecision"/>
<text x="23" y="798" font-size="10" fill="#1030e0" textLength="5" lengthAdjust="spacingAndGlyphs" font-family='"Liberation Sans", sans-serif' >1</text>
<polygon points="19,809 26,809 21,815 25,815 14,825 18,818 13,818" fill="#f4e030" stroke="#202020" stroke-width="1" shape-rendering="geometricPrecision"/>
<text x="23" y="825" font-size="10" fill="#1030e0" textLength="6" lengthAdjust="spacingAndGlyphs" font-family='"Liberation Sans", sans-serif' >R</text>
<polygon points="19,836 26,836 21,842 25,842 14,852 18,845 13,845" fill="#f4e030" stroke="#202020" stroke-width="1" shape-rendering="geometricPrecision"/>
<text x="23" y="852" font-size="10" fill="#1030e0" textLength="6" lengthAdjust="spacingAndGlyphs" font-family='"Liberation Sans", sans-serif' >V</text>
<polygon points="14,866 19,871 14,876.5" fill="#800080" shape-rendering="geometricPrecision"/>
<text x="21" y="877" font-size="12" fill="#800080" textLength="7" lengthAdjust="spacingAndGlyphs" font-family='"Liberation Sans", sans-serif' font-weight="bold">F</text>
<rect x="14.5" y="893.5" width="11" height="12" fill="#ffffff" stroke="#5070a0" stroke-width="1" />
<circle cx="22" cy="899" r="4" fill="#e8f0f8" stroke="#4a4a4a" stroke-width="1" shape-rendering="geometricPrecision"/>
<line x1="25" y1="902" x2="29" y2="906" stroke="#e09030" stroke-width="2" shape-rendering="geometricPrecision"/>
<path d="M17,923 L25,930 M25,923 L17,930" fill="none" stroke="#000" stroke-width="1.6" shape-rendering="geometricPrecision"/>
<rect x="39" y="756" width="53" height="21" fill="#ffffff" />
<defs><linearGradient id="tg" x1="0" x2="0" y1="0" y2="1"><stop offset="0" stop-color="#fbfbfb"/><stop offset="1" stop-color="#eeeeee"/></linearGradient></defs>
<rect x="94" y="756" width="81" height="20" fill="url(#tg)"/>
<rect x="178" y="756" width="94" height="20" fill="url(#tg)"/>
<rect x="275" y="756" width="93" height="20" fill="url(#tg)"/>
<rect x="371" y="756" width="96" height="20" fill="url(#tg)"/>
<line x1="35" y1="777.5" x2="651" y2="777.5" stroke="#ffffff" stroke-width="1" />
<text x="51" y="773" font-size="12" fill="#000" textLength="27" lengthAdjust="spacingAndGlyphs" font-family='"Liberation Sans", sans-serif' >Briefs</text>
<text x="107" y="771" font-size="12" fill="#000" textLength="52" lengthAdjust="spacingAndGlyphs" font-family='"Liberation Sans", sans-serif' >Beam Data</text>
<text x="195" y="771" font-size="12" fill="#000" textLength="57" lengthAdjust="spacingAndGlyphs" font-family='"Liberation Sans", sans-serif' >Links &amp; Nibs</text>
<text x="287" y="771" font-size="12" fill="#000" textLength="66" lengthAdjust="spacingAndGlyphs" font-family='"Liberation Sans", sans-serif' >Redistribution</text>
<text x="383" y="771" font-size="12" fill="#000" textLength="69" lengthAdjust="spacingAndGlyphs" font-family='"Liberation Sans", sans-serif' >Super Member</text>
<rect x="601" y="753" width="20" height="18" fill="#f5f5f5" />
<rect x="624" y="753" width="20" height="18" fill="#f5f5f5" />
<polygon points="607,763 611,758 611,761 615,761 615,765 611,765 611,768" fill="#3a70d8" shape-rendering="geometricPrecision"/>
<polygon points="638,763 634,758 634,761 630,761 630,765 634,765 634,768" fill="#3a70d8" shape-rendering="geometricPrecision"/>
<text x="51" y="806" font-size="12" fill="#000" textLength="60" lengthAdjust="spacingAndGlyphs" font-family='"Liberation Sans", sans-serif' >Brief 1 of 32</text>
<rect x="142.5" y="791.5" width="187" height="20" fill="#e5e5e5" stroke="#adadad" stroke-width="1" />
<text x="146" y="806" font-size="12" fill="#000" textLength="165" lengthAdjust="spacingAndGlyphs" font-family='"Liberation Sans", sans-serif' xml:space="preserve">00001   Member CB L1 Id 1 @ Leve</text>
<path d="M316,799 l4,4 l4,-4" fill="none" stroke="#404040" stroke-width="1" shape-rendering="geometricPrecision"/>
<rect x="334" y="792" width="13" height="20" fill="#f5f5f5" />
<path d="M336,800 l4,-4 l4,4" fill="none" stroke="#3a4a7a" stroke-width="1.5" shape-rendering="geometricPrecision"/>
<path d="M336,804 l4,4 l4,-4" fill="none" stroke="#3a4a7a" stroke-width="1.5" shape-rendering="geometricPrecision"/>
<circle cx="58" cy="847" r="6" fill="#ffffff" stroke="#333" stroke-width="1" shape-rendering="geometricPrecision"/>
<circle cx="58" cy="847" r="3.5" fill="#333" shape-rendering="geometricPrecision"/>
<text x="70" y="851" font-size="12" fill="#000" textLength="70" lengthAdjust="spacingAndGlyphs" font-family='"Liberation Sans", sans-serif' >Select Member</text>
<circle cx="154" cy="847" r="6" fill="#ffffff" stroke="#333" stroke-width="1" shape-rendering="geometricPrecision"/>
<text x="166" y="851" font-size="12" fill="#000" textLength="18" lengthAdjust="spacingAndGlyphs" font-family='"Liberation Sans", sans-serif' >Pad</text>
<circle cx="200" cy="847" r="6" fill="#ffffff" stroke="#333" stroke-width="1" shape-rendering="geometricPrecision"/>
<text x="212" y="851" font-size="12" fill="#000" textLength="42" lengthAdjust="spacingAndGlyphs" font-family='"Liberation Sans", sans-serif' xml:space="preserve">Copy  to</text>
<circle cx="270" cy="847" r="6" fill="#ffffff" stroke="#333" stroke-width="1" shape-rendering="geometricPrecision"/>
<text x="282" y="851" font-size="12" fill="#000" textLength="56" lengthAdjust="spacingAndGlyphs" font-family='"Liberation Sans", sans-serif' >Mirror Copy</text>
<rect x="194.5" y="866.5" width="12" height="12" fill="#ffffff" stroke="#333" stroke-width="1" />
<path d="M196.5,872.5 l3,3 l5,-6" fill="none" stroke="#222" stroke-width="1.2" shape-rendering="geometricPrecision"/>
<text x="212" y="877" font-size="12" fill="#000" textLength="21" lengthAdjust="spacingAndGlyphs" font-family='"Liberation Sans", sans-serif' >Bars</text>
<rect x="264.5" y="866.5" width="12" height="12" fill="#ffffff" stroke="#333" stroke-width="1" />
<path d="M266.5,872.5 l3,3 l5,-6" fill="none" stroke="#222" stroke-width="1.2" shape-rendering="geometricPrecision"/>
<text x="282" y="877" font-size="12" fill="#000" textLength="23" lengthAdjust="spacingAndGlyphs" font-family='"Liberation Sans", sans-serif' >Links</text>
<circle cx="568" cy="797.5" r="6" fill="#ffffff" stroke="#333" stroke-width="1" shape-rendering="geometricPrecision"/>
<circle cx="568" cy="797.5" r="3.5" fill="#333" shape-rendering="geometricPrecision"/>
<text x="580" y="802" font-size="12" fill="#000" textLength="39" lengthAdjust="spacingAndGlyphs" font-family='"Liberation Sans", sans-serif' >BS 8110</text>
<circle cx="568" cy="820.5" r="6" fill="#ffffff" stroke="#333" stroke-width="1" shape-rendering="geometricPrecision"/>
<text x="580" y="825" font-size="12" fill="#000" textLength="52" lengthAdjust="spacingAndGlyphs" font-family='"Liberation Sans", sans-serif' >SABS 0100</text>
<circle cx="568" cy="843.5" r="6" fill="#ffffff" stroke="#333" stroke-width="1" shape-rendering="geometricPrecision"/>
<text x="580" y="848" font-size="12" fill="#000" textLength="23" lengthAdjust="spacingAndGlyphs" font-family='"Liberation Sans", sans-serif' >EC 2</text>
<rect x="562" y="863" width="77" height="21" fill="#cccccc" stroke="#bdbdbd" stroke-width="1" />
<text x="565" y="878" font-size="12" fill="#8a8a8a" textLength="13" lengthAdjust="spacingAndGlyphs" font-family='"Liberation Sans", sans-serif' >UK</text>
<path d="M624,872 l4,4 l4,-4" fill="none" stroke="#a8a8a8" stroke-width="1" shape-rendering="geometricPrecision"/>
<rect x="355" y="947" width="14" height="8" fill="#8aa0b8" rx="1"/>
<rect x="358" y="943" width="8" height="5" fill="#ffffff" stroke="#8a8a8a" stroke-width="0.8" />
<rect x="357" y="952" width="10" height="4" fill="#d0d8e0" />
<rect x="363" y="950" width="2" height="2" fill="#20c020" />
<polygon points="376,948 383,948 379.5,952" fill="#222" shape-rendering="geometricPrecision"/>
<rect x="657" y="759" width="17" height="17" fill="#f3f3f3" />
<rect x="662.5" y="763.5" width="8.5" height="8.5" fill="none" stroke="#000" stroke-width="1" />
<line x1="662" y1="764.5" x2="671.5" y2="764.5" stroke="#000" stroke-width="2" />
<rect x="935" y="800" width="63" height="90" fill="#fff7dd" />
<line x1="935" y1="800.5" x2="998" y2="800.5" stroke="#222" stroke-width="1" />
<line x1="997.5" y1="800" x2="997.5" y2="890" stroke="#222" stroke-width="1" />
<line x1="935" y1="889.5" x2="998" y2="889.5" stroke="#222" stroke-width="1" />
<line x1="933.5" y1="808" x2="933.5" y2="882" stroke="#222" stroke-width="1" />
<rect x="938.5" y="804.5" width="54" height="81" rx="3.5" fill="none" stroke="#2a2a2a" stroke-width="1.6" shape-rendering="geometricPrecision"/>
<rect x="942" y="806" width="2" height="2" fill="#000080" />
<rect x="957" y="806" width="2" height="2" fill="#000080" />
<rect x="972" y="806" width="2" height="2" fill="#000080" />
<rect x="987" y="806" width="2" height="2" fill="#000080" />
<line x1="939" y1="879.7" x2="993" y2="879.7" stroke="#6060a8" stroke-width="2" />
<circle cx="943" cy="877.5" r="1.5" fill="#000080" shape-rendering="geometricPrecision"/>
<circle cx="943" cy="882.5" r="1.5" fill="#000080" shape-rendering="geometricPrecision"/>
<circle cx="958" cy="877.5" r="1.5" fill="#000080" shape-rendering="geometricPrecision"/>
<circle cx="958" cy="882.5" r="1.5" fill="#000080" shape-rendering="geometricPrecision"/>
<circle cx="973" cy="877.5" r="1.5" fill="#000080" shape-rendering="geometricPrecision"/>
<circle cx="973" cy="882.5" r="1.5" fill="#000080" shape-rendering="geometricPrecision"/>
<circle cx="988" cy="877.5" r="1.5" fill="#000080" shape-rendering="geometricPrecision"/>
<circle cx="988" cy="882.5" r="1.5" fill="#000080" shape-rendering="geometricPrecision"/>
<path d="M965,880 V856.5 H1020" fill="none" stroke="#ff0000" stroke-width="1" />
<text x="1023" y="864" font-size="8.5" fill="#0000e0" textLength="76" lengthAdjust="spacingAndGlyphs" font-family='"Liberation Sans", sans-serif' >18-H16-Spacers (600)</text>
<line x1="934" y1="779.5" x2="958" y2="779.5" stroke="#222" stroke-width="1" />
<line x1="977" y1="779.5" x2="998" y2="779.5" stroke="#222" stroke-width="1" />
<line x1="934.5" y1="774" x2="934.5" y2="784" stroke="#222" stroke-width="1" />
<line x1="997.5" y1="774" x2="997.5" y2="784" stroke="#222" stroke-width="1" />
<text x="959" y="783" font-size="8.5" fill="#000080" textLength="12" lengthAdjust="spacingAndGlyphs" font-family='"Liberation Sans", sans-serif' >400</text>
<text x="941" y="795" font-size="8.5" fill="#101030" textLength="5" lengthAdjust="spacingAndGlyphs" font-family='"Liberation Sans", sans-serif' >4</text>
<text x="941" y="900" font-size="8.5" fill="#101030" textLength="5" lengthAdjust="spacingAndGlyphs" font-family='"Liberation Sans", sans-serif' >5</text>
<text x="941" y="910.5" font-size="8.5" fill="#101030" textLength="5" lengthAdjust="spacingAndGlyphs" font-family='"Liberation Sans", sans-serif' >6</text>
<text x="956" y="795" font-size="8.5" fill="#101030" textLength="5" lengthAdjust="spacingAndGlyphs" font-family='"Liberation Sans", sans-serif' >4</text>
<text x="956" y="900" font-size="8.5" fill="#101030" textLength="5" lengthAdjust="spacingAndGlyphs" font-family='"Liberation Sans", sans-serif' >5</text>
<text x="956" y="910.5" font-size="8.5" fill="#101030" textLength="5" lengthAdjust="spacingAndGlyphs" font-family='"Liberation Sans", sans-serif' >6</text>
<text x="971" y="795" font-size="8.5" fill="#101030" textLength="5" lengthAdjust="spacingAndGlyphs" font-family='"Liberation Sans", sans-serif' >4</text>
<text x="971" y="900" font-size="8.5" fill="#101030" textLength="5" lengthAdjust="spacingAndGlyphs" font-family='"Liberation Sans", sans-serif' >5</text>
<text x="971" y="910.5" font-size="8.5" fill="#101030" textLength="5" lengthAdjust="spacingAndGlyphs" font-family='"Liberation Sans", sans-serif' >6</text>
<text x="986" y="795" font-size="8.5" fill="#101030" textLength="5" lengthAdjust="spacingAndGlyphs" font-family='"Liberation Sans", sans-serif' >4</text>
<text x="986" y="900" font-size="8.5" fill="#101030" textLength="5" lengthAdjust="spacingAndGlyphs" font-family='"Liberation Sans", sans-serif' >5</text>
<text x="986" y="910.5" font-size="8.5" fill="#101030" textLength="5" lengthAdjust="spacingAndGlyphs" font-family='"Liberation Sans", sans-serif' >6</text>
<line x1="902.5" y1="800" x2="902.5" y2="838" stroke="#222" stroke-width="1" />
<line x1="902.5" y1="851" x2="902.5" y2="889" stroke="#222" stroke-width="1" />
<line x1="897" y1="800.5" x2="908" y2="800.5" stroke="#222" stroke-width="1" />
<line x1="897" y1="889.5" x2="908" y2="889.5" stroke="#222" stroke-width="1" />
<text x="895" y="848" font-size="8.5" fill="#000080" textLength="12" lengthAdjust="spacingAndGlyphs" font-family='"Liberation Sans", sans-serif' >700</text>
<text x="921" y="804" font-size="8.5" fill="#000080" textLength="9" lengthAdjust="spacingAndGlyphs" font-family='"Liberation Sans", sans-serif' >30</text>
<text x="921" y="890" font-size="8.5" fill="#000080" textLength="9" lengthAdjust="spacingAndGlyphs" font-family='"Liberation Sans", sans-serif' >30</text>
<text x="922" y="910.5" font-size="8.5" fill="#000080" textLength="9" lengthAdjust="spacingAndGlyphs" font-family='"Liberation Sans", sans-serif' >30</text>
<text x="1002" y="910.5" font-size="8.5" fill="#000080" textLength="9" lengthAdjust="spacingAndGlyphs" font-family='"Liberation Sans", sans-serif' >30</text>
<line x1="938.5" y1="904" x2="938.5" y2="912" stroke="#222" stroke-width="1" />
<line x1="935" y1="908.5" x2="939" y2="908.5" stroke="#222" stroke-width="1" />
<line x1="993.5" y1="904" x2="993.5" y2="912" stroke="#222" stroke-width="1" />
<line x1="997.5" y1="904" x2="997.5" y2="912" stroke="#222" stroke-width="1" />
<line x1="993" y1="908.5" x2="998" y2="908.5" stroke="#222" stroke-width="1" />
<rect x="1276" y="956" width="1.5" height="1.5" fill="#a0a0a0" />
<rect x="1272" y="956" width="1.5" height="1.5" fill="#a0a0a0" />
<rect x="1268" y="956" width="1.5" height="1.5" fill="#a0a0a0" />
<rect x="1276" y="952" width="1.5" height="1.5" fill="#a0a0a0" />
<rect x="1272" y="952" width="1.5" height="1.5" fill="#a0a0a0" />
<rect x="1276" y="948" width="1.5" height="1.5" fill="#a0a0a0" />
</svg></body></html>
